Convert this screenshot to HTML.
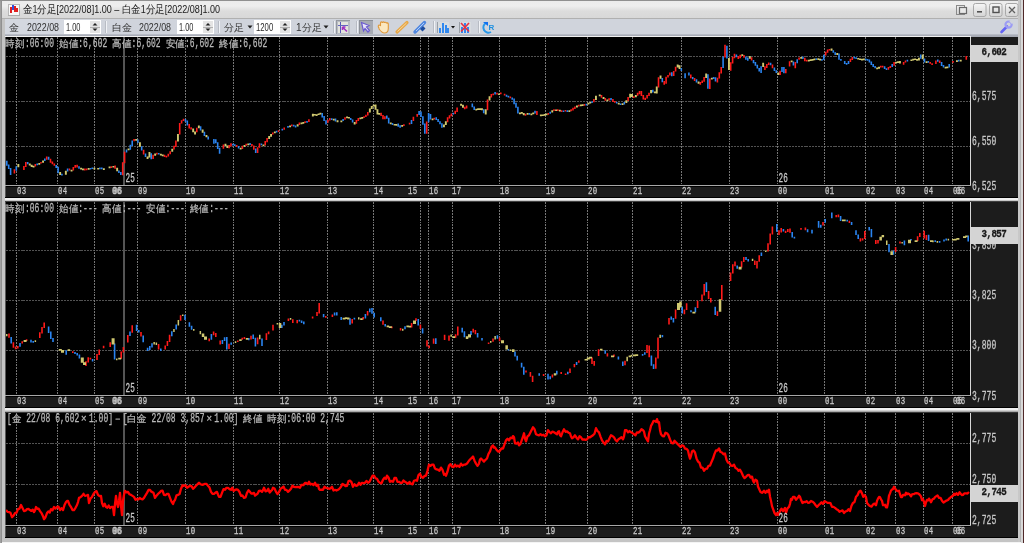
<!DOCTYPE html><html><head><meta charset="utf-8"><title>chart</title><style>html,body{margin:0;padding:0;width:1024px;height:543px;overflow:hidden;background:#c8c8c8}svg{display:block;will-change:transform}</style></head><body><svg width="1024" height="543" viewBox="0 0 1024 543"><defs>
<linearGradient id="tb" x1="0" y1="0" x2="0" y2="1"><stop offset="0" stop-color="#ececec"/><stop offset="0.3" stop-color="#eeeeee"/><stop offset="0.6" stop-color="#dcdcdc"/><stop offset="1" stop-color="#d8d8d8"/></linearGradient>
<linearGradient id="btn" x1="0" y1="0" x2="0" y2="1"><stop offset="0" stop-color="#f6f6f6"/><stop offset="1" stop-color="#d4d4d4"/></linearGradient>
<clipPath id="c1"><rect x="6" y="37" width="964" height="148"/></clipPath>
<clipPath id="c2"><rect x="6" y="202" width="964" height="193"/></clipPath>
<clipPath id="c3"><rect x="6" y="413" width="964" height="112"/></clipPath>
</defs><g shape-rendering="crispEdges"><rect x="0" y="0" width="1024" height="543" fill="#c4c4c4"/><rect x="0" y="0" width="1" height="543" fill="#a0a0a0"/><rect x="1" y="0" width="1" height="543" fill="#909090"/><rect x="0" y="0" width="1024" height="1" fill="#909090"/><rect x="2" y="1" width="1016" height="17" fill="url(#tb)"/><rect x="2" y="18" width="1016" height="1" fill="#b0b0b0"/><rect x="5" y="19" width="1013" height="15" fill="#d0d4dc"/><rect x="5" y="34" width="1013" height="1" fill="#b8bcc6"/><rect x="5" y="35" width="1013" height="2" fill="#a8acb6"/><rect x="5" y="36" width="966" height="1" fill="#f0f0f0"/><rect x="5" y="37" width="966" height="1" fill="#6a6a6a"/><rect x="1018" y="0" width="2" height="543" fill="#c8c8c8"/><rect x="1020" y="0" width="1" height="543" fill="#b4b4b4"/><rect x="1021" y="0" width="2" height="543" fill="#d8d8d8"/><rect x="1023" y="0" width="1" height="543" fill="#502828"/><rect x="2" y="538" width="1016" height="4" fill="#c4c4c4"/><rect x="2" y="542" width="1019" height="1" fill="#f4f4f4"/></g><g shape-rendering="crispEdges"><rect x="8" y="4" width="11" height="11" fill="#f8f8f8" stroke="#909090" stroke-width="0.6"/><rect x="10" y="7" width="2" height="6" fill="#e02020"/><rect x="12" y="5" width="2" height="5" fill="#3050e0"/><rect x="14" y="6" width="2" height="6" fill="#e02020"/><rect x="16" y="8" width="2" height="4" fill="#e02020"/></g><text x="23" y="12.8" font-family="'Liberation Sans',sans-serif" font-size="10.5" fill="#202020" textLength="197" lengthAdjust="spacingAndGlyphs">金1分足[2022/08]1.00 – 白金1分足[2022/08]1.00</text><rect x="956.5" y="5.5" width="8" height="9" fill="none" stroke="#8a8a8a" stroke-width="1"/><rect x="959.5" y="7.5" width="7" height="6" fill="#e8e8e8" stroke="#6a6a6a" stroke-width="1.2"/><rect x="973.5" y="3.5" width="12.5" height="13" rx="2" fill="url(#btn)" stroke="#a8a8a8" stroke-width="1"/><rect x="989.5" y="3.5" width="12.5" height="13" rx="2" fill="url(#btn)" stroke="#a8a8a8" stroke-width="1"/><rect x="1005.5" y="3.5" width="12.5" height="13" rx="2" fill="url(#btn)" stroke="#a8a8a8" stroke-width="1"/><rect x="977" y="11" width="5" height="1.6" fill="#505050"/><rect x="993" y="7" width="6" height="5.5" fill="none" stroke="#505050" stroke-width="1.4"/><path d="M1009 7 L1015 13 M1015 7 L1009 13" stroke="#606060" stroke-width="1.3"/><rect x="5" y="19" width="59" height="15" fill="#d4d8e0"/><text x="9" y="31" font-family="'Liberation Sans',sans-serif" font-size="10" fill="#303030">金</text><text x="27" y="31" font-family="'Liberation Sans',sans-serif" font-size="10.5" fill="#303030" textLength="32" lengthAdjust="spacingAndGlyphs">2022/08</text><g shape-rendering="crispEdges"><rect x="64" y="20" width="37" height="14" fill="#ffffff"/><rect x="90" y="21" width="10" height="12" fill="#e4e4e4"/><rect x="90" y="27" width="10" height="1" fill="#b0b0b0"/></g><path d="M92.5 25.5 l2.5 -2.5 l2.5 2.5 z M92.5 28.5 l2.5 2.5 l2.5 -2.5 z" fill="#202020"/><text x="66" y="30.5" font-family="'Liberation Sans',sans-serif" font-size="11" fill="#282828" textLength="14.4" lengthAdjust="spacingAndGlyphs">1.00</text><rect x="105" y="21" width="1" height="12" fill="#b8bcc4"/><rect x="106" y="21" width="1" height="12" fill="#f0f2f6"/><text x="112" y="31" font-family="'Liberation Sans',sans-serif" font-size="10" fill="#303030">白金</text><text x="139" y="31" font-family="'Liberation Sans',sans-serif" font-size="10.5" fill="#303030" textLength="32" lengthAdjust="spacingAndGlyphs">2022/08</text><g shape-rendering="crispEdges"><rect x="177" y="20" width="37" height="14" fill="#ffffff"/><rect x="203" y="21" width="10" height="12" fill="#e4e4e4"/><rect x="203" y="27" width="10" height="1" fill="#b0b0b0"/></g><path d="M205.5 25.5 l2.5 -2.5 l2.5 2.5 z M205.5 28.5 l2.5 2.5 l2.5 -2.5 z" fill="#202020"/><text x="179" y="30.5" font-family="'Liberation Sans',sans-serif" font-size="11" fill="#282828" textLength="14.4" lengthAdjust="spacingAndGlyphs">1.00</text><rect x="218" y="21" width="1" height="12" fill="#b8bcc4"/><rect x="219" y="21" width="1" height="12" fill="#f0f2f6"/><text x="224" y="31" font-family="'Liberation Sans',sans-serif" font-size="10" fill="#303030">分足</text><path d="M247.5 25.5 h5 l-2.5 3 z" fill="#202020"/><g shape-rendering="crispEdges"><rect x="254" y="20" width="37" height="14" fill="#ffffff"/><rect x="280" y="21" width="10" height="12" fill="#e4e4e4"/><rect x="280" y="27" width="10" height="1" fill="#b0b0b0"/></g><path d="M282.5 25.5 l2.5 -2.5 l2.5 2.5 z M282.5 28.5 l2.5 2.5 l2.5 -2.5 z" fill="#202020"/><text x="256" y="30.5" font-family="'Liberation Sans',sans-serif" font-size="11" fill="#282828" textLength="17.2" lengthAdjust="spacingAndGlyphs">1200</text><text x="296" y="31" font-family="'Liberation Sans',sans-serif" font-size="10" fill="#303030">1分足</text><path d="M323.5 25.5 h5 l-2.5 3 z" fill="#202020"/><rect x="333" y="21" width="1" height="12" fill="#b8bcc4"/><rect x="334" y="21" width="1" height="12" fill="#f0f2f6"/><g shape-rendering="crispEdges"><rect x="336" y="20" width="14" height="14" fill="#b8bcc4"/><rect x="336" y="20" width="14" height="1" fill="#9498a0"/><rect x="336" y="20" width="1" height="14" fill="#9498a0"/><rect x="338" y="22" width="10" height="11" fill="#e4e4dc"/><rect x="340" y="22" width="1" height="11" fill="#5858b8"/><rect x="338" y="25" width="10" height="1" fill="#6464c0"/></g><path d="M342.5 27 l4.5 4.5 M342.5 27 h3 M342.5 27 v3" stroke="#a030c0" stroke-width="1.6" fill="none"/><rect x="356" y="21" width="1" height="12" fill="#b8bcc4"/><rect x="357" y="21" width="1" height="12" fill="#f0f2f6"/><g shape-rendering="crispEdges"><rect x="359" y="20" width="14" height="14" fill="#a8acb4"/><rect x="359" y="20" width="14" height="1" fill="#8c9098"/><rect x="359" y="20" width="1" height="14" fill="#8c9098"/></g><path d="M361.5 22.5 l7.5 3 l-2.5 1.5 l3 3.5 l-1.5 1.5 l-3 -3.5 l-1.5 2.5 z" fill="#e8e4f8" stroke="#6a5ad0" stroke-width="1.2"/><path d="M379 28 c-1 -1 -1 -3 0 -3 c1 0 1.5 1 1.5 1 v-3 c0 -1.5 2 -1.5 2 0 c0 -1.5 2 -1.5 2 0 c0 -1 2 -1 2 0.5 c0 -1 1.8 -0.8 1.8 0.5 v4.5 c0 3 -2 4.5 -4 4.5 c-2 0 -3 -1 -5.3 -4 z" fill="#fbe8c0" stroke="#e09838" stroke-width="1.1"/><path d="M397 32 l10 -9.5" stroke="#e8a848" stroke-width="3.2" stroke-linecap="round"/><path d="M397.5 31.5 l9 -8.5" stroke="#f8d8a0" stroke-width="1"/><path d="M415 32 l9.5 -9.5" stroke="#5088e0" stroke-width="3.4" stroke-linecap="round"/><path d="M416 31 l8 -8" stroke="#b0ccf8" stroke-width="1"/><path d="M420 29 l3 -3 l2.5 2.5 l-3 3 z" fill="#1e4ea0"/><rect x="433" y="21" width="1" height="12" fill="#b8bcc4"/><rect x="434" y="21" width="1" height="12" fill="#f0f2f6"/><g shape-rendering="crispEdges"><rect x="437" y="22" width="12" height="11" fill="#d8dce0"/><rect x="437" y="22" width="1" height="11" fill="#9aa0a8"/><rect x="439" y="28" width="2" height="5" fill="#3088f0"/><rect x="442" y="23" width="2" height="10" fill="#3088f0"/><rect x="445" y="25" width="2" height="8" fill="#3088f0"/><rect x="447" y="28" width="2" height="5" fill="#3088f0"/></g><path d="M451 26 h4 l-2 2.5 z" fill="#101010"/><g shape-rendering="crispEdges"><rect x="459" y="22" width="12" height="11" fill="#d8dce0"/><rect x="459" y="22" width="1" height="11" fill="#9aa0a8"/><rect x="461" y="27" width="2" height="6" fill="#3088f0"/><rect x="464" y="23" width="2" height="10" fill="#3088f0"/><rect x="467" y="27" width="2" height="6" fill="#3088f0"/></g><path d="M461 23 l8 8.5 M469 23 l-8 8.5" stroke="#e83040" stroke-width="1.6"/><rect x="478" y="21" width="1" height="12" fill="#b8bcc4"/><rect x="479" y="21" width="1" height="12" fill="#f0f2f6"/><path d="M486 23 a4.6 4.6 0 1 0 5 9" fill="none" stroke="#2898e8" stroke-width="2"/><path d="M483 22 h5 v4 z" fill="#1070f0"/><text x="488.5" y="30" font-family="'Liberation Sans',sans-serif" font-size="8" font-weight="bold" fill="#2090e0">R</text><path d="M1001.5 32 l5.5 -5.5" stroke="#6464f4" stroke-width="2.6" stroke-linecap="round"/><circle cx="1008.6" cy="24.6" r="3.1" fill="none" stroke="#9c9cf4" stroke-width="2.2"/><path d="M1009.2 21.2 l3.2 -1.4 l1.2 1.2 l-1.4 3.2 z" fill="#d0d4dc"/><circle cx="1008.6" cy="24.6" r="1" fill="#d0d4dc"/><g shape-rendering="crispEdges"><rect x="5" y="37" width="1" height="160" fill="#585858"/><rect x="6" y="37" width="964" height="148" fill="#000"/><rect x="970" y="37" width="48" height="160" fill="#1c1c1c"/><rect x="970" y="37" width="1" height="149" fill="#d8d8d8"/><rect x="5" y="185" width="966" height="1" fill="#a8a8a8"/><rect x="6" y="186" width="964" height="1" fill="#000"/><rect x="6" y="187" width="964" height="10" fill="#1c1c1c"/><rect x="5" y="197" width="1013" height="1" fill="#000"/><line x1="6" y1="56.5" x2="970" y2="56.5" stroke="#525252" stroke-width="1" stroke-dasharray="2 0.9"/><line x1="6" y1="101.5" x2="970" y2="101.5" stroke="#525252" stroke-width="1" stroke-dasharray="2 0.9"/><line x1="6" y1="146.5" x2="970" y2="146.5" stroke="#525252" stroke-width="1" stroke-dasharray="2 0.9"/><line x1="16.5" y1="37" x2="16.5" y2="185" stroke="#767676" stroke-width="1" stroke-dasharray="1.8 1"/><line x1="57.5" y1="37" x2="57.5" y2="185" stroke="#767676" stroke-width="1" stroke-dasharray="1.8 1"/><line x1="94.5" y1="37" x2="94.5" y2="185" stroke="#767676" stroke-width="1" stroke-dasharray="1.8 1"/><rect x="123" y="37" width="2" height="148" fill="#555555"/><line x1="137.5" y1="37" x2="137.5" y2="185" stroke="#767676" stroke-width="1" stroke-dasharray="1.8 1"/><line x1="185.5" y1="37" x2="185.5" y2="185" stroke="#767676" stroke-width="1" stroke-dasharray="1.8 1"/><line x1="233.5" y1="37" x2="233.5" y2="185" stroke="#767676" stroke-width="1" stroke-dasharray="1.8 1"/><line x1="279.5" y1="37" x2="279.5" y2="185" stroke="#767676" stroke-width="1" stroke-dasharray="1.8 1"/><line x1="327.5" y1="37" x2="327.5" y2="185" stroke="#767676" stroke-width="1" stroke-dasharray="1.8 1"/><line x1="373.5" y1="37" x2="373.5" y2="185" stroke="#767676" stroke-width="1" stroke-dasharray="1.8 1"/><line x1="420.5" y1="37" x2="420.5" y2="185" stroke="#767676" stroke-width="1" stroke-dasharray="1.8 1"/><line x1="428.5" y1="37" x2="428.5" y2="185" stroke="#767676" stroke-width="1" stroke-dasharray="1.8 1"/><line x1="452.5" y1="37" x2="452.5" y2="185" stroke="#767676" stroke-width="1" stroke-dasharray="1.8 1"/><line x1="499.5" y1="37" x2="499.5" y2="185" stroke="#767676" stroke-width="1" stroke-dasharray="1.8 1"/><line x1="545.5" y1="37" x2="545.5" y2="185" stroke="#767676" stroke-width="1" stroke-dasharray="1.8 1"/><line x1="587.5" y1="37" x2="587.5" y2="185" stroke="#767676" stroke-width="1" stroke-dasharray="1.8 1"/><line x1="632.5" y1="37" x2="632.5" y2="185" stroke="#767676" stroke-width="1" stroke-dasharray="1.8 1"/><line x1="681.5" y1="37" x2="681.5" y2="185" stroke="#767676" stroke-width="1" stroke-dasharray="1.8 1"/><line x1="729.5" y1="37" x2="729.5" y2="185" stroke="#767676" stroke-width="1" stroke-dasharray="1.8 1"/><line x1="777.5" y1="37" x2="777.5" y2="185" stroke="#767676" stroke-width="1" stroke-dasharray="1.8 1"/><line x1="824.5" y1="37" x2="824.5" y2="185" stroke="#767676" stroke-width="1" stroke-dasharray="1.8 1"/><line x1="865.5" y1="37" x2="865.5" y2="185" stroke="#767676" stroke-width="1" stroke-dasharray="1.8 1"/><line x1="895.5" y1="37" x2="895.5" y2="185" stroke="#767676" stroke-width="1" stroke-dasharray="1.8 1"/><line x1="923.5" y1="37" x2="923.5" y2="185" stroke="#767676" stroke-width="1" stroke-dasharray="1.8 1"/><line x1="952.5" y1="37" x2="952.5" y2="185" stroke="#767676" stroke-width="1" stroke-dasharray="1.8 1"/></g><text transform="scale(0.64,1)" x="38.91 46.48 54.06 61.64 69.22 76.80 122.27 129.84 137.42 145.00 152.58 160.16 205.62 213.20 220.78 228.36 235.94 243.52 288.98 296.56 304.14 311.72 319.30 326.87 372.34 379.92 387.50 395.08 402.66 410.23" y="47" fill="#b8b8b8" stroke="#b8b8b8" stroke-width="0.3" font-family="'Liberation Mono',monospace" font-size="12.5" font-weight="normal">:06:00:6,602:6,602:6,602:6,602</text><text transform="scale(0.95,1)" x="5.79 16.00 61.95 72.16 118.11 128.32 174.26 184.47 230.42 240.63" y="47" fill="#b8b8b8" stroke="#b8b8b8" stroke-width="0.25" font-family="'Liberation Sans',sans-serif" font-size="10" font-weight="normal">時刻始値高値安値終値</text><path clip-path="url(#c1)" d="M13.6 169.3h1.6v4.3h-1.6zM23.1 166.0h1.6v4.0h-1.6zM25.0 162.0h1.6v4.9h-1.6zM34.5 164.1h1.6v2.5h-1.6zM40.2 161.9h1.6v1.7h-1.6zM45.9 156.4h1.6v3.3h-1.6zM49.7 158.7h1.6v4.0h-1.6zM51.6 161.5h1.6v2.8h-1.6zM53.5 163.5h1.6v2.2h-1.6zM68.7 168.6h1.6v2.0h-1.6zM72.5 167.0h1.6v3.6h-1.6zM74.4 165.0h1.6v2.8h-1.6zM76.3 164.8h1.6v2.7h-1.6zM83.9 168.6h1.6v1.9h-1.6zM85.8 168.5h1.6v1.7h-1.6zM110.5 166.2h1.6v1.7h-1.6zM114.3 165.6h1.6v3.1h-1.6zM121.9 162.2h1.6v13.0h-1.6zM123.8 151.8h1.6v11.5h-1.6zM133.3 139.0h1.6v2.3h-1.6zM142.8 149.7h1.6v4.7h-1.6zM152.3 154.8h1.6v4.3h-1.6zM156.1 152.8h1.6v1.7h-1.6zM163.7 154.8h1.6v2.3h-1.6zM165.6 155.8h1.6v1.7h-1.6zM167.5 153.7h1.6v2.9h-1.6zM169.4 151.3h1.6v2.9h-1.6zM173.2 145.8h1.6v3.6h-1.6zM175.1 140.6h1.6v6.3h-1.6zM178.9 123.0h1.6v11.6h-1.6zM180.8 120.2h1.6v3.3h-1.6zM182.7 118.7h1.6v2.4h-1.6zM188.4 124.0h1.6v4.4h-1.6zM190.3 127.2h1.6v2.3h-1.6zM196.0 127.7h1.6v4.6h-1.6zM222.6 144.6h1.6v4.2h-1.6zM228.3 145.0h1.6v3.2h-1.6zM230.2 143.3h1.6v3.2h-1.6zM235.9 145.1h1.6v2.0h-1.6zM241.6 145.8h1.6v3.2h-1.6zM245.4 143.7h1.6v2.1h-1.6zM251.1 144.0h1.6v2.3h-1.6zM253.0 145.4h1.6v4.4h-1.6zM256.8 147.2h1.6v5.8h-1.6zM258.7 143.2h1.6v4.6h-1.6zM264.4 141.1h1.6v4.4h-1.6zM266.3 138.0h1.6v4.3h-1.6zM272.0 132.6h1.6v2.0h-1.6zM277.7 130.2h1.6v1.7h-1.6zM283.4 127.4h1.6v2.4h-1.6zM291.0 124.5h1.6v1.8h-1.6zM298.6 122.6h1.6v2.3h-1.6zM304.3 121.3h1.6v1.8h-1.6zM308.1 119.3h1.6v2.7h-1.6zM327.1 119.8h1.6v3.0h-1.6zM329.0 118.0h1.6v2.5h-1.6zM344.2 117.3h1.6v2.4h-1.6zM355.6 120.1h1.6v3.7h-1.6zM357.5 118.0h1.6v3.1h-1.6zM363.2 116.3h1.6v1.7h-1.6zM365.1 114.7h1.6v2.2h-1.6zM367.0 111.9h1.6v3.5h-1.6zM380.3 112.7h1.6v3.2h-1.6zM382.2 114.9h1.6v4.4h-1.6zM384.1 116.3h1.6v3.0h-1.6zM403.1 124.3h1.6v1.7h-1.6zM408.8 122.8h1.6v1.7h-1.6zM412.6 116.8h1.6v4.2h-1.6zM416.4 113.9h1.6v2.8h-1.6zM425.9 121.6h1.6v12.1h-1.6zM433.5 117.8h1.6v1.7h-1.6zM446.8 117.2h1.6v5.0h-1.6zM448.7 115.3h1.6v3.1h-1.6zM450.6 113.5h1.6v2.7h-1.6zM454.4 110.7h1.6v3.2h-1.6zM456.3 107.6h1.6v4.4h-1.6zM463.9 106.7h1.6v2.6h-1.6zM465.8 105.5h1.6v3.0h-1.6zM486.7 99.5h1.6v10.7h-1.6zM490.5 94.1h1.6v3.3h-1.6zM492.4 93.5h1.6v1.7h-1.6zM496.2 92.7h1.6v1.7h-1.6zM500.0 92.6h1.6v1.7h-1.6zM503.8 93.8h1.6v1.7h-1.6zM509.5 96.6h1.6v1.7h-1.6zM524.7 113.8h1.6v1.9h-1.6zM536.1 110.9h1.6v4.1h-1.6zM547.5 113.1h1.6v1.7h-1.6zM553.2 109.2h1.6v1.7h-1.6zM557.0 109.2h1.6v1.7h-1.6zM560.8 110.3h1.6v1.8h-1.6zM564.6 109.9h1.6v1.7h-1.6zM570.3 109.2h1.6v2.0h-1.6zM572.2 107.8h1.6v2.6h-1.6zM574.1 106.6h1.6v2.4h-1.6zM577.9 104.7h1.6v1.7h-1.6zM583.6 104.0h1.6v1.7h-1.6zM593.1 98.9h1.6v3.4h-1.6zM600.7 95.0h1.6v2.8h-1.6zM604.5 98.0h1.6v2.8h-1.6zM608.3 98.2h1.6v2.4h-1.6zM612.1 99.1h1.6v2.9h-1.6zM614.0 101.1h1.6v1.7h-1.6zM627.3 97.1h1.6v3.8h-1.6zM633.0 96.3h1.6v1.8h-1.6zM636.8 92.8h1.6v3.0h-1.6zM638.7 91.1h1.6v3.1h-1.6zM640.6 90.9h1.6v5.1h-1.6zM642.5 95.0h1.6v4.4h-1.6zM644.4 97.7h1.6v2.3h-1.6zM646.3 95.1h1.6v3.5h-1.6zM648.2 92.8h1.6v3.2h-1.6zM657.7 77.2h1.6v10.3h-1.6zM663.4 81.0h1.6v3.7h-1.6zM665.3 76.7h1.6v7.0h-1.6zM667.2 74.9h1.6v2.7h-1.6zM669.1 72.4h1.6v3.2h-1.6zM672.9 70.9h1.6v5.2h-1.6zM674.8 66.8h1.6v4.7h-1.6zM690.0 74.6h1.6v3.6h-1.6zM693.8 78.1h1.6v2.8h-1.6zM699.5 82.0h1.6v2.8h-1.6zM701.4 80.5h1.6v2.6h-1.6zM703.3 77.0h1.6v4.7h-1.6zM709.0 78.6h1.6v10.4h-1.6zM716.6 77.7h1.6v4.8h-1.6zM718.5 72.3h1.6v6.3h-1.6zM720.4 67.0h1.6v6.5h-1.6zM724.2 44.7h1.6v12.8h-1.6zM729.9 62.2h1.6v8.6h-1.6zM731.8 57.0h1.6v6.4h-1.6zM733.7 53.8h1.6v4.5h-1.6zM737.5 56.0h1.6v3.0h-1.6zM739.4 54.7h1.6v3.6h-1.6zM743.2 55.0h1.6v2.8h-1.6zM750.8 57.2h1.6v3.4h-1.6zM764.1 66.2h1.6v3.9h-1.6zM766.0 63.9h1.6v4.2h-1.6zM767.9 62.6h1.6v2.5h-1.6zM771.7 64.6h1.6v3.7h-1.6zM779.3 70.7h1.6v4.4h-1.6zM785.0 69.1h1.6v4.1h-1.6zM788.8 61.3h1.6v5.1h-1.6zM794.5 62.0h1.6v6.2h-1.6zM798.3 57.4h1.6v2.4h-1.6zM804.0 57.7h1.6v3.5h-1.6zM805.9 59.8h1.6v1.7h-1.6zM824.9 51.8h1.6v3.6h-1.6zM826.8 49.4h1.6v3.3h-1.6zM828.7 48.9h1.6v1.7h-1.6zM849.6 58.8h1.6v3.1h-1.6zM851.5 56.9h1.6v3.2h-1.6zM880.0 65.8h1.6v1.8h-1.6zM881.9 65.7h1.6v1.7h-1.6zM887.6 67.1h1.6v2.7h-1.6zM889.5 66.0h1.6v1.9h-1.6zM893.3 61.9h1.6v3.8h-1.6zM902.8 61.9h1.6v2.9h-1.6zM904.7 60.4h1.6v2.1h-1.6zM929.4 62.0h1.6v1.8h-1.6zM931.3 63.2h1.6v1.8h-1.6zM935.1 60.6h1.6v3.4h-1.6zM938.9 60.4h1.6v2.7h-1.6zM952.2 60.9h1.6v1.9h-1.6zM965.5 56.1h1.6v3.7h-1.6z" fill="#ff1a1a"/><path clip-path="url(#c1)" d="M6.0 160.8h1.6v4.9h-1.6zM7.9 164.5h1.6v4.5h-1.6zM9.8 167.9h1.6v7.1h-1.6zM15.5 166.2h1.6v4.6h-1.6zM26.9 162.0h1.6v2.3h-1.6zM36.4 163.5h1.6v1.7h-1.6zM44.0 158.6h1.6v2.5h-1.6zM47.8 156.7h1.6v3.0h-1.6zM55.4 165.0h1.6v3.1h-1.6zM57.3 166.8h1.6v6.4h-1.6zM61.1 173.8h1.6v1.7h-1.6zM66.8 168.4h1.6v3.0h-1.6zM78.2 166.2h1.6v2.6h-1.6zM89.6 167.9h1.6v1.7h-1.6zM91.5 167.4h1.6v1.7h-1.6zM99.1 167.6h1.6v1.7h-1.6zM101.0 167.5h1.6v1.8h-1.6zM118.1 170.5h1.6v2.6h-1.6zM120.0 171.9h1.6v3.2h-1.6zM125.7 149.6h1.6v2.9h-1.6zM129.5 144.7h1.6v5.0h-1.6zM131.4 140.4h1.6v5.7h-1.6zM137.1 139.5h1.6v3.6h-1.6zM140.9 146.2h1.6v4.4h-1.6zM144.7 153.4h1.6v3.7h-1.6zM150.4 153.3h1.6v5.9h-1.6zM158.0 152.9h1.6v1.7h-1.6zM184.6 118.9h1.6v2.9h-1.6zM186.5 120.4h1.6v5.0h-1.6zM199.8 126.2h1.6v4.4h-1.6zM203.6 131.8h1.6v4.1h-1.6zM207.4 136.4h1.6v3.1h-1.6zM213.1 139.1h1.6v4.7h-1.6zM215.0 139.2h1.6v4.1h-1.6zM216.9 142.3h1.6v6.7h-1.6zM218.8 147.8h1.6v6.0h-1.6zM232.1 143.8h1.6v1.7h-1.6zM234.0 144.3h1.6v1.8h-1.6zM237.8 146.0h1.6v2.4h-1.6zM249.2 143.1h1.6v1.9h-1.6zM254.9 148.6h1.6v4.3h-1.6zM260.6 143.4h1.6v1.9h-1.6zM275.8 130.8h1.6v1.7h-1.6zM281.5 128.8h1.6v1.7h-1.6zM287.2 126.0h1.6v1.8h-1.6zM292.9 124.7h1.6v1.7h-1.6zM294.8 125.4h1.6v2.2h-1.6zM306.2 121.0h1.6v1.7h-1.6zM321.4 113.0h1.6v4.5h-1.6zM323.3 116.1h1.6v5.0h-1.6zM325.2 120.2h1.6v4.2h-1.6zM330.9 118.2h1.6v1.7h-1.6zM334.7 118.6h1.6v2.8h-1.6zM342.3 119.0h1.6v2.0h-1.6zM349.9 117.9h1.6v2.1h-1.6zM351.8 119.5h1.6v3.1h-1.6zM386.0 115.5h1.6v3.3h-1.6zM387.9 117.7h1.6v5.7h-1.6zM391.7 123.0h1.6v1.9h-1.6zM397.4 123.6h1.6v3.1h-1.6zM399.3 125.3h1.6v2.5h-1.6zM410.7 119.9h1.6v4.0h-1.6zM418.3 110.9h1.6v4.0h-1.6zM420.2 111.5h1.6v5.5h-1.6zM422.1 116.2h1.6v8.5h-1.6zM424.0 123.5h1.6v10.3h-1.6zM427.8 113.0h1.6v9.2h-1.6zM429.7 114.1h1.6v5.3h-1.6zM435.4 117.2h1.6v2.7h-1.6zM437.3 118.9h1.6v3.0h-1.6zM439.2 121.2h1.6v3.1h-1.6zM441.1 123.3h1.6v4.4h-1.6zM452.5 112.7h1.6v1.9h-1.6zM471.5 103.6h1.6v3.7h-1.6zM473.4 106.4h1.6v3.6h-1.6zM482.9 109.2h1.6v4.0h-1.6zM494.3 92.1h1.6v2.5h-1.6zM505.7 94.7h1.6v2.0h-1.6zM507.6 95.8h1.6v1.7h-1.6zM511.4 97.4h1.6v2.4h-1.6zM513.3 98.5h1.6v5.8h-1.6zM515.2 102.8h1.6v5.0h-1.6zM517.1 106.8h1.6v6.7h-1.6zM528.5 113.0h1.6v1.7h-1.6zM534.2 110.8h1.6v2.6h-1.6zM549.4 111.8h1.6v1.9h-1.6zM562.7 110.4h1.6v1.7h-1.6zM566.5 110.2h1.6v1.7h-1.6zM585.5 103.7h1.6v1.7h-1.6zM591.2 101.2h1.6v1.7h-1.6zM610.2 97.9h1.6v2.4h-1.6zM615.9 101.9h1.6v1.7h-1.6zM619.7 103.4h1.6v1.7h-1.6zM623.5 102.1h1.6v2.3h-1.6zM652.0 89.8h1.6v2.6h-1.6zM661.5 78.1h1.6v4.1h-1.6zM671.0 72.3h1.6v3.9h-1.6zM680.5 68.0h1.6v3.1h-1.6zM684.3 73.2h1.6v5.0h-1.6zM688.1 72.6h1.6v3.0h-1.6zM691.9 76.9h1.6v2.4h-1.6zM695.7 79.3h1.6v3.2h-1.6zM707.1 74.3h1.6v14.5h-1.6zM712.8 76.9h1.6v2.0h-1.6zM714.7 77.3h1.6v4.3h-1.6zM722.3 56.6h1.6v11.4h-1.6zM726.1 45.7h1.6v12.8h-1.6zM735.6 54.5h1.6v2.8h-1.6zM745.1 56.5h1.6v3.2h-1.6zM747.0 57.6h1.6v3.1h-1.6zM752.7 59.9h1.6v3.3h-1.6zM754.6 62.0h1.6v3.8h-1.6zM756.5 64.8h1.6v3.6h-1.6zM758.4 67.9h1.6v3.7h-1.6zM760.3 66.3h1.6v6.8h-1.6zM769.8 62.7h1.6v2.6h-1.6zM773.6 67.6h1.6v3.4h-1.6zM775.5 70.3h1.6v2.8h-1.6zM781.2 67.0h1.6v4.9h-1.6zM783.1 66.9h1.6v6.4h-1.6zM792.6 61.5h1.6v4.1h-1.6zM796.4 59.2h1.6v4.0h-1.6zM802.1 56.5h1.6v2.4h-1.6zM815.4 58.2h1.6v1.7h-1.6zM821.1 59.1h1.6v1.7h-1.6zM823.0 54.7h1.6v5.0h-1.6zM832.5 50.2h1.6v2.5h-1.6zM834.4 52.2h1.6v2.8h-1.6zM838.2 53.6h1.6v6.2h-1.6zM840.1 59.1h1.6v1.7h-1.6zM843.9 61.1h1.6v2.8h-1.6zM845.8 63.0h1.6v1.8h-1.6zM847.7 61.0h1.6v2.9h-1.6zM853.4 56.7h1.6v1.7h-1.6zM855.3 57.3h1.6v1.7h-1.6zM864.8 58.5h1.6v1.7h-1.6zM866.7 59.1h1.6v1.7h-1.6zM868.6 59.5h1.6v3.1h-1.6zM870.5 61.6h1.6v3.4h-1.6zM872.4 63.9h1.6v3.1h-1.6zM874.3 66.0h1.6v2.3h-1.6zM883.8 66.2h1.6v2.8h-1.6zM885.7 68.3h1.6v1.7h-1.6zM891.4 64.1h1.6v2.9h-1.6zM906.6 59.8h1.6v1.7h-1.6zM919.9 54.5h1.6v4.3h-1.6zM923.7 58.5h1.6v3.9h-1.6zM927.5 61.0h1.6v1.7h-1.6zM937.0 59.4h1.6v2.4h-1.6zM940.8 61.9h1.6v4.0h-1.6zM942.7 64.9h1.6v2.7h-1.6zM948.4 64.0h1.6v3.4h-1.6zM957.9 59.7h1.6v1.7h-1.6z" fill="#2a84f0"/><path clip-path="url(#c1)" d="M17.4 164.1h1.9v3.2h-1.9zM28.8 163.5h1.9v1.9h-1.9zM30.7 164.8h1.9v2.1h-1.9zM32.6 165.7h1.9v1.7h-1.9zM38.3 163.0h1.9v1.7h-1.9zM42.1 160.5h1.9v2.2h-1.9zM59.2 172.1h1.9v2.8h-1.9zM64.9 170.8h1.9v3.9h-1.9zM70.6 169.8h1.9v1.7h-1.9zM80.1 167.7h1.9v1.7h-1.9zM82.0 168.5h1.9v1.7h-1.9zM87.7 168.0h1.9v1.7h-1.9zM93.4 167.7h1.9v1.7h-1.9zM97.2 167.9h1.9v1.7h-1.9zM102.9 168.3h1.9v1.7h-1.9zM108.6 166.6h1.9v1.7h-1.9zM112.4 165.9h1.9v1.7h-1.9zM116.2 167.7h1.9v3.5h-1.9zM127.6 148.6h1.9v1.7h-1.9zM135.2 139.0h1.9v1.7h-1.9zM139.0 142.3h1.9v4.4h-1.9zM146.6 156.4h1.9v2.7h-1.9zM148.5 152.0h1.9v5.6h-1.9zM154.2 153.5h1.9v2.3h-1.9zM159.9 153.8h1.9v1.7h-1.9zM161.8 154.5h1.9v1.7h-1.9zM171.3 148.7h1.9v3.0h-1.9zM177.0 134.1h1.9v7.4h-1.9zM192.2 128.6h1.9v3.6h-1.9zM194.1 131.5h1.9v2.9h-1.9zM197.9 125.4h1.9v2.9h-1.9zM201.7 129.5h1.9v3.3h-1.9zM205.5 134.9h1.9v2.4h-1.9zM224.5 143.8h1.9v2.3h-1.9zM226.4 145.6h1.9v2.5h-1.9zM239.7 147.7h1.9v1.7h-1.9zM243.5 144.9h1.9v2.1h-1.9zM247.3 143.5h1.9v1.7h-1.9zM262.5 144.6h1.9v1.7h-1.9zM268.2 136.1h1.9v2.8h-1.9zM270.1 134.0h1.9v2.7h-1.9zM273.9 131.4h1.9v1.8h-1.9zM289.1 125.5h1.9v1.7h-1.9zM296.7 124.3h1.9v2.2h-1.9zM300.5 122.5h1.9v1.7h-1.9zM302.4 122.1h1.9v1.7h-1.9zM311.9 113.7h1.9v2.7h-1.9zM313.8 113.9h1.9v1.7h-1.9zM315.7 114.2h1.9v1.7h-1.9zM317.6 113.4h1.9v1.7h-1.9zM319.5 112.7h1.9v1.7h-1.9zM332.8 118.8h1.9v1.7h-1.9zM336.6 120.3h1.9v2.0h-1.9zM340.4 120.5h1.9v1.7h-1.9zM346.1 116.5h1.9v1.7h-1.9zM348.0 116.9h1.9v1.7h-1.9zM353.7 122.0h1.9v2.4h-1.9zM359.4 117.6h1.9v1.7h-1.9zM361.3 117.0h1.9v1.7h-1.9zM368.9 108.6h1.9v3.9h-1.9zM370.8 106.0h1.9v3.1h-1.9zM372.7 104.7h1.9v1.7h-1.9zM374.6 104.5h1.9v5.3h-1.9zM376.5 109.2h1.9v5.2h-1.9zM378.4 113.1h1.9v1.7h-1.9zM389.8 122.5h1.9v1.7h-1.9zM393.6 123.9h1.9v1.7h-1.9zM395.5 124.0h1.9v1.7h-1.9zM401.2 125.0h1.9v1.7h-1.9zM431.6 118.6h1.9v1.7h-1.9zM443.0 124.4h1.9v2.9h-1.9zM444.9 121.2h1.9v3.7h-1.9zM460.1 103.7h1.9v2.0h-1.9zM462.0 104.8h1.9v2.9h-1.9zM475.3 108.7h1.9v1.7h-1.9zM477.2 108.3h1.9v1.7h-1.9zM479.1 108.3h1.9v1.7h-1.9zM481.0 108.2h1.9v2.0h-1.9zM484.8 109.2h1.9v5.3h-1.9zM488.6 96.3h1.9v4.1h-1.9zM498.1 93.4h1.9v1.7h-1.9zM519.0 112.5h1.9v1.7h-1.9zM520.9 112.1h1.9v1.7h-1.9zM522.8 112.9h1.9v2.3h-1.9zM526.6 113.0h1.9v1.7h-1.9zM530.4 113.6h1.9v1.7h-1.9zM532.3 112.5h1.9v1.8h-1.9zM539.9 114.5h1.9v1.7h-1.9zM541.8 114.4h1.9v1.7h-1.9zM543.7 114.1h1.9v1.7h-1.9zM545.6 113.5h1.9v1.7h-1.9zM551.3 110.2h1.9v2.2h-1.9zM555.1 109.4h1.9v1.7h-1.9zM558.9 109.8h1.9v1.7h-1.9zM568.4 110.3h1.9v1.7h-1.9zM576.0 105.4h1.9v2.1h-1.9zM579.8 104.6h1.9v1.7h-1.9zM581.7 104.3h1.9v1.7h-1.9zM587.4 102.8h1.9v1.7h-1.9zM589.3 101.9h1.9v1.7h-1.9zM595.0 95.7h1.9v4.2h-1.9zM598.8 94.6h1.9v1.7h-1.9zM602.6 97.0h1.9v2.0h-1.9zM606.4 99.5h1.9v1.7h-1.9zM617.8 102.8h1.9v1.7h-1.9zM621.6 103.3h1.9v1.7h-1.9zM625.4 100.2h1.9v2.9h-1.9zM629.2 93.8h1.9v4.0h-1.9zM631.1 93.9h1.9v3.0h-1.9zM634.9 94.9h1.9v2.4h-1.9zM650.1 90.1h1.9v3.2h-1.9zM653.9 91.4h1.9v1.9h-1.9zM655.8 86.5h1.9v7.0h-1.9zM659.6 75.4h1.9v3.4h-1.9zM676.7 64.4h1.9v3.0h-1.9zM678.6 65.3h1.9v3.6h-1.9zM697.6 81.5h1.9v2.2h-1.9zM705.2 73.5h1.9v4.6h-1.9zM710.9 77.8h1.9v1.7h-1.9zM728.0 57.9h1.9v12.0h-1.9zM741.3 54.2h1.9v1.7h-1.9zM748.9 55.9h1.9v2.8h-1.9zM762.2 62.8h1.9v4.3h-1.9zM777.4 72.6h1.9v2.5h-1.9zM790.7 60.6h1.9v1.7h-1.9zM800.2 57.0h1.9v1.7h-1.9zM807.8 59.7h1.9v1.7h-1.9zM809.7 59.3h1.9v1.7h-1.9zM811.6 59.0h1.9v1.7h-1.9zM813.5 58.5h1.9v1.7h-1.9zM817.3 58.3h1.9v1.7h-1.9zM819.2 58.7h1.9v1.7h-1.9zM830.6 48.6h1.9v2.2h-1.9zM836.3 53.0h1.9v1.9h-1.9zM857.2 57.9h1.9v1.7h-1.9zM859.1 58.4h1.9v1.7h-1.9zM861.0 58.8h1.9v1.7h-1.9zM862.9 58.5h1.9v1.7h-1.9zM876.2 67.6h1.9v1.7h-1.9zM878.1 66.8h1.9v1.9h-1.9zM895.2 61.7h1.9v1.7h-1.9zM897.1 61.3h1.9v1.7h-1.9zM899.0 61.1h1.9v2.3h-1.9zM910.4 59.4h1.9v1.7h-1.9zM912.3 58.8h1.9v1.7h-1.9zM914.2 58.4h1.9v1.7h-1.9zM916.1 59.0h1.9v1.7h-1.9zM918.0 57.7h1.9v2.7h-1.9zM921.8 54.6h1.9v4.7h-1.9zM925.6 61.2h1.9v1.7h-1.9zM944.6 66.8h1.9v1.7h-1.9zM946.5 66.5h1.9v1.7h-1.9zM956.0 60.2h1.9v1.7h-1.9zM959.8 59.7h1.9v1.7h-1.9z" fill="#d0c870"/><text transform="scale(0.64,1)" x="196.09 203.67" y="182" fill="#c8c8c8" stroke="#c8c8c8" stroke-width="0.3" font-family="'Liberation Mono',monospace" font-size="12" font-weight="normal">25</text><text transform="scale(0.64,1)" x="1216.41 1223.98" y="182" fill="#c8c8c8" stroke="#c8c8c8" stroke-width="0.3" font-family="'Liberation Mono',monospace" font-size="12" font-weight="normal">26</text><text transform="scale(0.64,1)" x="26.56 34.14" y="194" fill="#c8c8c8" stroke="#c8c8c8" stroke-width="0.3" font-family="'Liberation Mono',monospace" font-size="11.5" font-weight="normal">03</text><text transform="scale(0.64,1)" x="90.62 98.20" y="194" fill="#c8c8c8" stroke="#c8c8c8" stroke-width="0.3" font-family="'Liberation Mono',monospace" font-size="11.5" font-weight="normal">04</text><text transform="scale(0.64,1)" x="148.44 156.02" y="194" fill="#c8c8c8" stroke="#c8c8c8" stroke-width="0.3" font-family="'Liberation Mono',monospace" font-size="11.5" font-weight="normal">05</text><text transform="scale(0.64,1)" x="175.00 182.58" y="194" fill="#c8c8c8" stroke="#c8c8c8" stroke-width="0.3" font-family="'Liberation Mono',monospace" font-size="11.5" font-weight="normal">06</text><text transform="scale(0.64,1)" x="176.56 184.14" y="194" fill="#c8c8c8" stroke="#c8c8c8" stroke-width="0.3" font-family="'Liberation Mono',monospace" font-size="11.5" font-weight="normal">06</text><text transform="scale(0.64,1)" x="215.62 223.20" y="194" fill="#c8c8c8" stroke="#c8c8c8" stroke-width="0.3" font-family="'Liberation Mono',monospace" font-size="11.5" font-weight="normal">09</text><text transform="scale(0.64,1)" x="290.62 298.20" y="194" fill="#c8c8c8" stroke="#c8c8c8" stroke-width="0.3" font-family="'Liberation Mono',monospace" font-size="11.5" font-weight="normal">10</text><text transform="scale(0.64,1)" x="365.62 373.20" y="194" fill="#c8c8c8" stroke="#c8c8c8" stroke-width="0.3" font-family="'Liberation Mono',monospace" font-size="11.5" font-weight="normal">11</text><text transform="scale(0.64,1)" x="437.50 445.08" y="194" fill="#c8c8c8" stroke="#c8c8c8" stroke-width="0.3" font-family="'Liberation Mono',monospace" font-size="11.5" font-weight="normal">12</text><text transform="scale(0.64,1)" x="512.50 520.08" y="194" fill="#c8c8c8" stroke="#c8c8c8" stroke-width="0.3" font-family="'Liberation Mono',monospace" font-size="11.5" font-weight="normal">13</text><text transform="scale(0.64,1)" x="584.38 591.95" y="194" fill="#c8c8c8" stroke="#c8c8c8" stroke-width="0.3" font-family="'Liberation Mono',monospace" font-size="11.5" font-weight="normal">14</text><text transform="scale(0.64,1)" x="637.50 645.08" y="194" fill="#c8c8c8" stroke="#c8c8c8" stroke-width="0.3" font-family="'Liberation Mono',monospace" font-size="11.5" font-weight="normal">15</text><text transform="scale(0.64,1)" x="670.31 677.89" y="194" fill="#c8c8c8" stroke="#c8c8c8" stroke-width="0.3" font-family="'Liberation Mono',monospace" font-size="11.5" font-weight="normal">16</text><text transform="scale(0.64,1)" x="706.25 713.83" y="194" fill="#c8c8c8" stroke="#c8c8c8" stroke-width="0.3" font-family="'Liberation Mono',monospace" font-size="11.5" font-weight="normal">17</text><text transform="scale(0.64,1)" x="781.25 788.83" y="194" fill="#c8c8c8" stroke="#c8c8c8" stroke-width="0.3" font-family="'Liberation Mono',monospace" font-size="11.5" font-weight="normal">18</text><text transform="scale(0.64,1)" x="853.12 860.70" y="194" fill="#c8c8c8" stroke="#c8c8c8" stroke-width="0.3" font-family="'Liberation Mono',monospace" font-size="11.5" font-weight="normal">19</text><text transform="scale(0.64,1)" x="918.75 926.33" y="194" fill="#c8c8c8" stroke="#c8c8c8" stroke-width="0.3" font-family="'Liberation Mono',monospace" font-size="11.5" font-weight="normal">20</text><text transform="scale(0.64,1)" x="989.06 996.64" y="194" fill="#c8c8c8" stroke="#c8c8c8" stroke-width="0.3" font-family="'Liberation Mono',monospace" font-size="11.5" font-weight="normal">21</text><text transform="scale(0.64,1)" x="1065.62 1073.20" y="194" fill="#c8c8c8" stroke="#c8c8c8" stroke-width="0.3" font-family="'Liberation Mono',monospace" font-size="11.5" font-weight="normal">22</text><text transform="scale(0.64,1)" x="1140.62 1148.20" y="194" fill="#c8c8c8" stroke="#c8c8c8" stroke-width="0.3" font-family="'Liberation Mono',monospace" font-size="11.5" font-weight="normal">23</text><text transform="scale(0.64,1)" x="1215.62 1223.20" y="194" fill="#c8c8c8" stroke="#c8c8c8" stroke-width="0.3" font-family="'Liberation Mono',monospace" font-size="11.5" font-weight="normal">00</text><text transform="scale(0.64,1)" x="1289.06 1296.64" y="194" fill="#c8c8c8" stroke="#c8c8c8" stroke-width="0.3" font-family="'Liberation Mono',monospace" font-size="11.5" font-weight="normal">01</text><text transform="scale(0.64,1)" x="1353.12 1360.70" y="194" fill="#c8c8c8" stroke="#c8c8c8" stroke-width="0.3" font-family="'Liberation Mono',monospace" font-size="11.5" font-weight="normal">02</text><text transform="scale(0.64,1)" x="1400.00 1407.58" y="194" fill="#c8c8c8" stroke="#c8c8c8" stroke-width="0.3" font-family="'Liberation Mono',monospace" font-size="11.5" font-weight="normal">03</text><text transform="scale(0.64,1)" x="1443.75 1451.33" y="194" fill="#c8c8c8" stroke="#c8c8c8" stroke-width="0.3" font-family="'Liberation Mono',monospace" font-size="11.5" font-weight="normal">04</text><text transform="scale(0.64,1)" x="1489.06 1496.64" y="194" fill="#c8c8c8" stroke="#c8c8c8" stroke-width="0.3" font-family="'Liberation Mono',monospace" font-size="11.5" font-weight="normal">05</text><text transform="scale(0.64,1)" x="1493.75 1501.33" y="194" fill="#c8c8c8" stroke="#c8c8c8" stroke-width="0.3" font-family="'Liberation Mono',monospace" font-size="11.5" font-weight="normal">06</text><text transform="scale(0.64,1)" x="1518.75 1526.33 1533.91 1541.48 1549.06" y="55.5" fill="#c8c8c8" stroke="#c8c8c8" stroke-width="0.3" font-family="'Liberation Mono',monospace" font-size="12.5" font-weight="normal">6,600</text><text transform="scale(0.64,1)" x="1518.75 1526.33 1533.91 1541.48 1549.06" y="100.0" fill="#c8c8c8" stroke="#c8c8c8" stroke-width="0.3" font-family="'Liberation Mono',monospace" font-size="12.5" font-weight="normal">6,575</text><text transform="scale(0.64,1)" x="1518.75 1526.33 1533.91 1541.48 1549.06" y="145.2" fill="#c8c8c8" stroke="#c8c8c8" stroke-width="0.3" font-family="'Liberation Mono',monospace" font-size="12.5" font-weight="normal">6,550</text><text transform="scale(0.64,1)" x="1518.75 1526.33 1533.91 1541.48 1549.06" y="189.9" fill="#c8c8c8" stroke="#c8c8c8" stroke-width="0.3" font-family="'Liberation Mono',monospace" font-size="12.5" font-weight="normal">6,525</text><rect x="971" y="45" width="47" height="17" fill="#d4d4d4" shape-rendering="crispEdges"/><g stroke="#181818" stroke-width="0.35"><text transform="scale(0.8,1)" x="1226.88 1233.06 1239.25 1245.44 1251.63" y="55.1" fill="#181818" stroke="#181818" stroke-width="0.3" font-family="'Liberation Mono',monospace" font-size="11.5" font-weight="bold">6,602</text></g><g shape-rendering="crispEdges"><rect x="5" y="202" width="1" height="205" fill="#585858"/><rect x="6" y="202" width="964" height="193" fill="#000"/><rect x="970" y="202" width="48" height="205" fill="#1c1c1c"/><rect x="970" y="202" width="1" height="194" fill="#d8d8d8"/><rect x="5" y="395" width="966" height="1" fill="#a8a8a8"/><rect x="6" y="396" width="964" height="1" fill="#000"/><rect x="6" y="397" width="964" height="10" fill="#1c1c1c"/><rect x="5" y="407" width="1013" height="1" fill="#000"/><line x1="6" y1="250.5" x2="970" y2="250.5" stroke="#525252" stroke-width="1" stroke-dasharray="2 0.9"/><line x1="6" y1="300.5" x2="970" y2="300.5" stroke="#525252" stroke-width="1" stroke-dasharray="2 0.9"/><line x1="6" y1="350.5" x2="970" y2="350.5" stroke="#525252" stroke-width="1" stroke-dasharray="2 0.9"/><line x1="16.5" y1="202" x2="16.5" y2="395" stroke="#767676" stroke-width="1" stroke-dasharray="1.8 1"/><line x1="57.5" y1="202" x2="57.5" y2="395" stroke="#767676" stroke-width="1" stroke-dasharray="1.8 1"/><line x1="94.5" y1="202" x2="94.5" y2="395" stroke="#767676" stroke-width="1" stroke-dasharray="1.8 1"/><rect x="123" y="202" width="2" height="193" fill="#555555"/><line x1="137.5" y1="202" x2="137.5" y2="395" stroke="#767676" stroke-width="1" stroke-dasharray="1.8 1"/><line x1="185.5" y1="202" x2="185.5" y2="395" stroke="#767676" stroke-width="1" stroke-dasharray="1.8 1"/><line x1="233.5" y1="202" x2="233.5" y2="395" stroke="#767676" stroke-width="1" stroke-dasharray="1.8 1"/><line x1="279.5" y1="202" x2="279.5" y2="395" stroke="#767676" stroke-width="1" stroke-dasharray="1.8 1"/><line x1="327.5" y1="202" x2="327.5" y2="395" stroke="#767676" stroke-width="1" stroke-dasharray="1.8 1"/><line x1="373.5" y1="202" x2="373.5" y2="395" stroke="#767676" stroke-width="1" stroke-dasharray="1.8 1"/><line x1="420.5" y1="202" x2="420.5" y2="395" stroke="#767676" stroke-width="1" stroke-dasharray="1.8 1"/><line x1="428.5" y1="202" x2="428.5" y2="395" stroke="#767676" stroke-width="1" stroke-dasharray="1.8 1"/><line x1="452.5" y1="202" x2="452.5" y2="395" stroke="#767676" stroke-width="1" stroke-dasharray="1.8 1"/><line x1="499.5" y1="202" x2="499.5" y2="395" stroke="#767676" stroke-width="1" stroke-dasharray="1.8 1"/><line x1="545.5" y1="202" x2="545.5" y2="395" stroke="#767676" stroke-width="1" stroke-dasharray="1.8 1"/><line x1="587.5" y1="202" x2="587.5" y2="395" stroke="#767676" stroke-width="1" stroke-dasharray="1.8 1"/><line x1="632.5" y1="202" x2="632.5" y2="395" stroke="#767676" stroke-width="1" stroke-dasharray="1.8 1"/><line x1="681.5" y1="202" x2="681.5" y2="395" stroke="#767676" stroke-width="1" stroke-dasharray="1.8 1"/><line x1="729.5" y1="202" x2="729.5" y2="395" stroke="#767676" stroke-width="1" stroke-dasharray="1.8 1"/><line x1="777.5" y1="202" x2="777.5" y2="395" stroke="#767676" stroke-width="1" stroke-dasharray="1.8 1"/><line x1="824.5" y1="202" x2="824.5" y2="395" stroke="#767676" stroke-width="1" stroke-dasharray="1.8 1"/><line x1="865.5" y1="202" x2="865.5" y2="395" stroke="#767676" stroke-width="1" stroke-dasharray="1.8 1"/><line x1="895.5" y1="202" x2="895.5" y2="395" stroke="#767676" stroke-width="1" stroke-dasharray="1.8 1"/><line x1="923.5" y1="202" x2="923.5" y2="395" stroke="#767676" stroke-width="1" stroke-dasharray="1.8 1"/><line x1="952.5" y1="202" x2="952.5" y2="395" stroke="#767676" stroke-width="1" stroke-dasharray="1.8 1"/></g><text transform="scale(0.64,1)" x="38.91 46.48 54.06 61.64 69.22 76.80 122.27 129.84 137.42 145.00 190.47 198.05 205.62 213.20 258.67 266.25 273.83 281.41 326.87 334.45 342.03 349.61" y="212" fill="#b8b8b8" stroke="#b8b8b8" stroke-width="0.3" font-family="'Liberation Mono',monospace" font-size="12.5" font-weight="normal">:06:00:---:---:---:---</text><text transform="scale(0.95,1)" x="5.79 16.00 61.95 72.16 107.89 118.11 153.84 164.05 199.79 210.00" y="212" fill="#b8b8b8" stroke="#b8b8b8" stroke-width="0.25" font-family="'Liberation Sans',sans-serif" font-size="10" font-weight="normal">時刻始値高値安値終値</text><path clip-path="url(#c2)" d="M8.2 333.6h1.6v4.1h-1.6zM12.6 342.3h1.6v5.4h-1.6zM14.8 346.4h1.6v2.9h-1.6zM17.0 346.0h1.6v2.6h-1.6zM21.4 341.2h1.6v2.3h-1.6zM25.8 339.3h1.6v1.8h-1.6zM39.0 332.3h1.6v5.7h-1.6zM41.2 327.0h1.6v6.4h-1.6zM43.4 322.4h1.6v5.5h-1.6zM72.0 351.2h1.6v1.7h-1.6zM85.2 361.2h1.6v4.8h-1.6zM87.4 357.2h1.6v5.3h-1.6zM89.6 357.8h1.6v1.8h-1.6zM96.2 354.1h1.6v5.9h-1.6zM98.4 349.6h1.6v5.3h-1.6zM102.8 345.7h1.6v2.6h-1.6zM109.4 342.2h1.6v4.9h-1.6zM120.4 351.4h1.6v7.3h-1.6zM122.6 346.9h1.6v5.5h-1.6zM127.0 334.9h1.6v7.6h-1.6zM131.4 325.3h1.6v7.5h-1.6zM140.2 332.1h1.6v4.3h-1.6zM157.8 344.1h1.6v5.4h-1.6zM164.4 345.6h1.6v3.8h-1.6zM166.6 340.9h1.6v5.2h-1.6zM168.8 334.8h1.6v7.1h-1.6zM179.8 315.2h1.6v5.5h-1.6zM208.4 338.4h1.6v2.8h-1.6zM212.8 331.6h1.6v3.6h-1.6zM215.0 333.1h1.6v4.0h-1.6zM219.4 340.4h1.6v4.0h-1.6zM228.2 343.8h1.6v5.1h-1.6zM237.0 340.4h1.6v1.7h-1.6zM241.4 337.7h1.6v2.0h-1.6zM243.6 337.1h1.6v2.0h-1.6zM250.2 335.8h1.6v3.6h-1.6zM256.8 337.4h1.6v6.8h-1.6zM265.6 333.2h1.6v6.9h-1.6zM267.8 331.4h1.6v2.8h-1.6zM272.2 324.7h1.6v5.8h-1.6zM287.6 318.4h1.6v2.5h-1.6zM292.0 319.2h1.6v3.9h-1.6zM296.4 320.0h1.6v3.3h-1.6zM311.8 316.4h1.6v2.0h-1.6zM316.2 312.1h1.6v3.9h-1.6zM318.4 303.0h1.6v10.5h-1.6zM325.0 316.0h1.6v1.7h-1.6zM331.6 314.4h1.6v2.6h-1.6zM351.4 319.0h1.6v4.5h-1.6zM362.4 317.0h1.6v2.4h-1.6zM366.8 311.1h1.6v4.4h-1.6zM382.2 320.5h1.6v4.3h-1.6zM391.0 326.5h1.6v1.7h-1.6zM399.8 327.9h1.6v2.5h-1.6zM410.8 323.0h1.6v4.5h-1.6zM415.2 318.3h1.6v2.6h-1.6zM419.6 324.5h1.6v4.5h-1.6zM426.2 340.3h1.6v6.2h-1.6zM428.4 345.4h1.6v2.8h-1.6zM432.8 338.5h1.6v5.3h-1.6zM443.8 334.7h1.6v5.3h-1.6zM448.2 335.6h1.6v5.1h-1.6zM454.8 334.3h1.6v3.5h-1.6zM457.0 326.4h1.6v9.0h-1.6zM472.4 328.8h1.6v3.6h-1.6zM474.6 330.0h1.6v4.2h-1.6zM487.8 342.4h1.6v1.7h-1.6zM492.2 338.4h1.6v3.4h-1.6zM498.8 337.4h1.6v3.8h-1.6zM525.2 370.4h1.6v2.2h-1.6zM529.6 371.9h1.6v4.9h-1.6zM531.8 375.8h1.6v6.2h-1.6zM542.8 373.9h1.6v2.1h-1.6zM551.6 374.4h1.6v3.1h-1.6zM560.4 371.9h1.6v2.2h-1.6zM564.8 373.4h1.6v1.7h-1.6zM569.2 368.5h1.6v4.5h-1.6zM573.6 363.9h1.6v3.3h-1.6zM578.0 360.4h1.6v2.4h-1.6zM591.2 357.5h1.6v6.4h-1.6zM593.4 361.0h1.6v4.7h-1.6zM597.8 349.2h1.6v6.9h-1.6zM606.6 353.2h1.6v3.3h-1.6zM613.2 354.4h1.6v2.3h-1.6zM624.2 360.8h1.6v4.5h-1.6zM646.2 345.0h1.6v7.9h-1.6zM648.4 345.4h1.6v11.8h-1.6zM655.0 357.6h1.6v11.2h-1.6zM657.2 337.5h1.6v21.0h-1.6zM668.2 318.0h1.6v6.5h-1.6zM674.8 309.6h1.6v9.1h-1.6zM683.6 309.5h1.6v4.7h-1.6zM685.8 303.3h1.6v6.8h-1.6zM696.8 300.8h1.6v7.1h-1.6zM701.2 294.5h1.6v6.8h-1.6zM703.4 284.0h1.6v11.6h-1.6zM707.8 290.9h1.6v8.0h-1.6zM710.0 297.9h1.6v4.7h-1.6zM716.6 311.2h1.6v4.7h-1.6zM721.0 285.0h1.6v15.1h-1.6zM729.8 272.5h1.6v8.6h-1.6zM732.0 264.2h1.6v9.3h-1.6zM734.2 261.4h1.6v4.8h-1.6zM740.8 261.3h1.6v6.1h-1.6zM743.0 257.0h1.6v4.9h-1.6zM754.0 260.4h1.6v4.5h-1.6zM756.2 260.9h1.6v7.7h-1.6zM758.4 255.2h1.6v6.5h-1.6zM767.2 243.2h1.6v8.2h-1.6zM769.4 233.4h1.6v11.1h-1.6zM771.6 226.4h1.6v8.2h-1.6zM778.2 230.3h1.6v4.6h-1.6zM780.4 227.9h1.6v4.5h-1.6zM784.8 230.7h1.6v2.2h-1.6zM787.0 229.0h1.6v3.0h-1.6zM789.2 228.4h1.6v4.4h-1.6zM800.2 227.9h1.6v1.9h-1.6zM804.6 227.4h1.6v2.9h-1.6zM822.2 221.9h1.6v3.6h-1.6zM835.4 215.1h1.6v2.2h-1.6zM837.6 214.6h1.6v2.7h-1.6zM848.6 220.7h1.6v2.2h-1.6zM859.6 238.2h1.6v3.3h-1.6zM861.8 238.3h1.6v2.3h-1.6zM864.0 231.1h1.6v7.8h-1.6zM875.0 239.9h1.6v4.2h-1.6zM877.2 239.9h1.6v3.6h-1.6zM894.8 247.0h1.6v5.0h-1.6zM899.2 241.5h1.6v2.0h-1.6zM916.8 236.3h1.6v4.6h-1.6zM919.0 232.9h1.6v4.2h-1.6zM923.4 230.8h1.6v7.6h-1.6zM925.6 234.9h1.6v5.0h-1.6z" fill="#ff1a1a"/><path clip-path="url(#c2)" d="M10.4 336.9h1.6v6.5h-1.6zM19.2 343.0h1.6v3.7h-1.6zM30.2 339.7h1.6v2.8h-1.6zM32.4 341.0h1.6v1.8h-1.6zM47.8 326.6h1.6v6.3h-1.6zM50.0 331.4h1.6v7.5h-1.6zM52.2 337.9h1.6v4.1h-1.6zM65.4 350.2h1.6v4.5h-1.6zM74.2 352.1h1.6v1.8h-1.6zM76.4 353.1h1.6v2.5h-1.6zM78.6 354.4h1.6v4.1h-1.6zM91.8 358.9h1.6v2.6h-1.6zM113.8 343.5h1.6v15.9h-1.6zM129.2 331.6h1.6v4.4h-1.6zM135.8 324.8h1.6v6.3h-1.6zM138.0 330.1h1.6v2.5h-1.6zM142.4 335.6h1.6v6.6h-1.6zM146.8 347.7h1.6v3.4h-1.6zM149.0 346.1h1.6v3.8h-1.6zM151.2 343.3h1.6v4.1h-1.6zM160.0 348.4h1.6v2.6h-1.6zM171.0 331.2h1.6v5.0h-1.6zM175.4 324.6h1.6v4.9h-1.6zM184.2 314.8h1.6v5.3h-1.6zM188.6 322.2h1.6v4.5h-1.6zM190.8 325.7h1.6v4.1h-1.6zM210.6 334.1h1.6v5.7h-1.6zM221.6 339.9h1.6v4.0h-1.6zM223.8 337.2h1.6v3.9h-1.6zM226.0 336.9h1.6v12.7h-1.6zM230.4 342.5h1.6v2.2h-1.6zM248.0 338.0h1.6v2.3h-1.6zM252.4 334.4h1.6v4.5h-1.6zM254.6 337.8h1.6v8.8h-1.6zM261.2 338.4h1.6v7.5h-1.6zM281.0 324.7h1.6v3.3h-1.6zM283.2 322.1h1.6v3.4h-1.6zM298.6 319.8h1.6v1.8h-1.6zM300.8 320.5h1.6v2.4h-1.6zM303.0 321.4h1.6v2.9h-1.6zM322.8 314.0h1.6v3.2h-1.6zM333.8 312.5h1.6v2.9h-1.6zM336.0 312.3h1.6v3.3h-1.6zM340.4 316.9h1.6v3.1h-1.6zM349.2 318.3h1.6v6.4h-1.6zM353.6 317.8h1.6v1.7h-1.6zM364.6 314.0h1.6v4.5h-1.6zM369.0 308.6h1.6v3.7h-1.6zM371.2 308.1h1.6v5.6h-1.6zM373.4 312.8h1.6v4.6h-1.6zM380.0 317.2h1.6v4.1h-1.6zM384.4 323.9h1.6v2.5h-1.6zM404.2 326.3h1.6v3.0h-1.6zM417.4 318.9h1.6v6.7h-1.6zM421.8 328.3h1.6v5.3h-1.6zM435.0 338.2h1.6v5.7h-1.6zM461.4 327.7h1.6v4.8h-1.6zM463.6 331.3h1.6v5.9h-1.6zM470.2 330.9h1.6v4.2h-1.6zM476.8 333.1h1.6v4.3h-1.6zM481.2 338.1h1.6v2.5h-1.6zM496.6 335.3h1.6v3.4h-1.6zM507.6 348.9h1.6v1.7h-1.6zM514.2 351.4h1.6v5.1h-1.6zM516.4 355.7h1.6v4.7h-1.6zM520.8 362.8h1.6v4.6h-1.6zM523.0 366.8h1.6v8.0h-1.6zM538.4 373.2h1.6v2.5h-1.6zM547.2 373.8h1.6v5.6h-1.6zM549.4 376.2h1.6v3.0h-1.6zM556.0 370.8h1.6v3.6h-1.6zM567.0 371.8h1.6v2.5h-1.6zM575.8 362.1h1.6v2.9h-1.6zM604.4 350.3h1.6v3.4h-1.6zM617.6 356.6h1.6v3.0h-1.6zM622.0 361.5h1.6v4.6h-1.6zM641.8 354.1h1.6v1.7h-1.6zM644.0 352.3h1.6v2.4h-1.6zM650.6 355.6h1.6v10.1h-1.6zM652.8 364.2h1.6v4.7h-1.6zM661.6 334.9h1.6v2.3h-1.6zM670.4 316.4h1.6v3.4h-1.6zM672.6 318.1h1.6v4.4h-1.6zM681.4 306.6h1.6v6.9h-1.6zM690.2 310.2h1.6v2.1h-1.6zM694.6 307.3h1.6v5.0h-1.6zM705.6 282.3h1.6v9.8h-1.6zM714.4 306.8h1.6v8.1h-1.6zM736.4 265.4h1.6v3.4h-1.6zM745.2 256.9h1.6v3.1h-1.6zM747.4 259.0h1.6v2.5h-1.6zM760.6 252.6h1.6v3.4h-1.6zM776.0 223.9h1.6v7.8h-1.6zM782.6 229.0h1.6v2.5h-1.6zM791.4 232.1h1.6v5.5h-1.6zM793.6 236.8h1.6v1.7h-1.6zM806.8 229.3h1.6v2.9h-1.6zM811.2 229.8h1.6v3.6h-1.6zM817.8 220.9h1.6v6.8h-1.6zM820.0 224.8h1.6v2.9h-1.6zM824.4 218.9h1.6v3.8h-1.6zM831.0 212.4h1.6v5.8h-1.6zM839.8 216.0h1.6v5.0h-1.6zM846.4 219.7h1.6v1.8h-1.6zM850.8 222.1h1.6v2.9h-1.6zM855.2 230.2h1.6v4.7h-1.6zM857.4 234.4h1.6v4.6h-1.6zM868.4 227.1h1.6v3.3h-1.6zM870.6 229.0h1.6v8.2h-1.6zM888.2 244.0h1.6v8.2h-1.6zM892.6 250.8h1.6v3.9h-1.6zM903.6 240.4h1.6v4.8h-1.6zM910.2 238.9h1.6v1.7h-1.6zM927.8 234.7h1.6v6.3h-1.6zM934.4 240.3h1.6v1.7h-1.6zM938.8 241.0h1.6v1.7h-1.6zM943.2 239.5h1.6v2.1h-1.6zM945.4 238.4h1.6v2.2h-1.6zM967.4 235.4h1.6v6.0h-1.6z" fill="#2a84f0"/><path clip-path="url(#c2)" d="M6.0 334.1h1.5v2.1h-1.5zM23.6 340.1h3.0v1.8h-3.0zM34.6 340.2h1.5v1.7h-1.5zM58.8 348.9h3.0v1.8h-3.0zM61.0 349.9h3.0v2.9h-3.0zM67.6 349.3h2.5v1.7h-2.5zM80.8 357.5h3.0v5.3h-3.0zM83.0 362.2h3.0v2.8h-3.0zM111.6 338.3h3.0v6.1h-3.0zM116.0 358.6h1.5v1.7h-1.5zM118.2 357.7h3.0v1.7h-3.0zM153.4 342.0h1.5v2.4h-1.5zM155.6 342.6h1.5v2.5h-1.5zM173.2 328.9h1.5v3.1h-1.5zM177.6 319.9h1.5v5.5h-1.5zM182.0 314.4h1.5v1.7h-1.5zM193.0 329.1h1.5v1.7h-1.5zM199.6 330.9h1.5v3.3h-1.5zM201.8 333.4h2.5v3.6h-2.5zM204.0 336.5h3.0v3.2h-3.0zM234.8 341.2h1.5v1.7h-1.5zM239.2 339.2h2.5v1.8h-2.5zM245.8 338.1h2.5v1.7h-2.5zM259.0 334.7h1.5v4.6h-1.5zM276.6 322.9h1.5v1.7h-1.5zM278.8 322.9h2.5v5.0h-2.5zM289.8 318.1h1.5v1.7h-1.5zM342.6 317.8h3.0v1.7h-3.0zM344.8 317.3h2.5v1.7h-2.5zM347.0 317.5h2.5v1.9h-2.5zM358.0 317.3h1.5v2.3h-1.5zM360.2 318.2h2.5v1.7h-2.5zM386.6 325.6h2.5v1.7h-2.5zM388.8 326.2h3.0v1.7h-3.0zM402.0 328.7h1.5v2.0h-1.5zM406.4 325.6h2.5v1.7h-2.5zM408.6 325.8h2.5v1.7h-2.5zM413.0 320.5h3.0v3.5h-3.0zM450.4 334.6h1.5v2.2h-1.5zM452.6 336.3h2.5v1.8h-2.5zM465.8 336.3h2.5v2.7h-2.5zM468.0 334.2h3.0v3.4h-3.0zM490.0 340.9h1.5v1.9h-1.5zM494.4 336.1h1.5v3.3h-1.5zM501.0 340.3h3.0v2.9h-3.0zM505.4 345.3h2.5v4.1h-2.5zM509.8 349.4h1.5v1.7h-1.5zM512.0 349.3h2.5v2.7h-2.5zM553.8 373.3h2.5v2.2h-2.5zM584.6 358.9h3.0v1.7h-3.0zM586.8 357.5h3.0v1.9h-3.0zM589.0 356.8h3.0v1.7h-3.0zM600.0 348.7h2.5v1.7h-2.5zM611.0 355.5h3.0v1.8h-3.0zM626.4 356.7h1.5v4.5h-1.5zM628.6 355.4h2.5v1.9h-2.5zM630.8 354.8h1.5v1.7h-1.5zM633.0 354.5h3.0v1.7h-3.0zM635.2 354.2h3.0v1.7h-3.0zM659.4 334.7h1.5v3.4h-1.5zM677.0 303.1h3.0v7.0h-3.0zM679.2 301.6h2.5v5.8h-2.5zM692.4 311.7h3.0v1.7h-3.0zM718.8 299.2h2.5v12.6h-2.5zM738.6 266.7h3.0v2.9h-3.0zM751.8 258.8h1.5v2.3h-1.5zM765.0 250.4h1.5v1.7h-1.5zM842.0 219.6h2.5v1.7h-2.5zM844.2 219.5h1.5v1.7h-1.5zM879.4 236.7h2.5v3.7h-2.5zM881.6 234.9h2.5v2.4h-2.5zM886.0 240.4h1.5v4.6h-1.5zM890.4 251.2h2.5v3.7h-2.5zM901.4 241.9h1.5v1.7h-1.5zM908.0 239.8h3.0v3.5h-3.0zM914.6 240.2h3.0v1.7h-3.0zM930.0 240.2h3.0v1.7h-3.0zM932.2 240.5h1.5v1.7h-1.5zM936.6 241.0h1.5v1.7h-1.5zM947.6 238.8h1.5v1.7h-1.5zM952.0 238.9h2.5v1.7h-2.5zM954.2 238.7h2.5v1.7h-2.5zM956.4 238.1h3.0v1.7h-3.0zM963.0 236.3h3.0v1.7h-3.0zM965.2 235.6h2.5v1.7h-2.5z" fill="#d0c870"/><text transform="scale(0.64,1)" x="196.09 203.67" y="392" fill="#c8c8c8" stroke="#c8c8c8" stroke-width="0.3" font-family="'Liberation Mono',monospace" font-size="12" font-weight="normal">25</text><text transform="scale(0.64,1)" x="1216.41 1223.98" y="392" fill="#c8c8c8" stroke="#c8c8c8" stroke-width="0.3" font-family="'Liberation Mono',monospace" font-size="12" font-weight="normal">26</text><text transform="scale(0.64,1)" x="26.56 34.14" y="404" fill="#c8c8c8" stroke="#c8c8c8" stroke-width="0.3" font-family="'Liberation Mono',monospace" font-size="11.5" font-weight="normal">03</text><text transform="scale(0.64,1)" x="90.62 98.20" y="404" fill="#c8c8c8" stroke="#c8c8c8" stroke-width="0.3" font-family="'Liberation Mono',monospace" font-size="11.5" font-weight="normal">04</text><text transform="scale(0.64,1)" x="148.44 156.02" y="404" fill="#c8c8c8" stroke="#c8c8c8" stroke-width="0.3" font-family="'Liberation Mono',monospace" font-size="11.5" font-weight="normal">05</text><text transform="scale(0.64,1)" x="175.00 182.58" y="404" fill="#c8c8c8" stroke="#c8c8c8" stroke-width="0.3" font-family="'Liberation Mono',monospace" font-size="11.5" font-weight="normal">06</text><text transform="scale(0.64,1)" x="176.56 184.14" y="404" fill="#c8c8c8" stroke="#c8c8c8" stroke-width="0.3" font-family="'Liberation Mono',monospace" font-size="11.5" font-weight="normal">06</text><text transform="scale(0.64,1)" x="215.62 223.20" y="404" fill="#c8c8c8" stroke="#c8c8c8" stroke-width="0.3" font-family="'Liberation Mono',monospace" font-size="11.5" font-weight="normal">09</text><text transform="scale(0.64,1)" x="290.62 298.20" y="404" fill="#c8c8c8" stroke="#c8c8c8" stroke-width="0.3" font-family="'Liberation Mono',monospace" font-size="11.5" font-weight="normal">10</text><text transform="scale(0.64,1)" x="365.62 373.20" y="404" fill="#c8c8c8" stroke="#c8c8c8" stroke-width="0.3" font-family="'Liberation Mono',monospace" font-size="11.5" font-weight="normal">11</text><text transform="scale(0.64,1)" x="437.50 445.08" y="404" fill="#c8c8c8" stroke="#c8c8c8" stroke-width="0.3" font-family="'Liberation Mono',monospace" font-size="11.5" font-weight="normal">12</text><text transform="scale(0.64,1)" x="512.50 520.08" y="404" fill="#c8c8c8" stroke="#c8c8c8" stroke-width="0.3" font-family="'Liberation Mono',monospace" font-size="11.5" font-weight="normal">13</text><text transform="scale(0.64,1)" x="584.38 591.95" y="404" fill="#c8c8c8" stroke="#c8c8c8" stroke-width="0.3" font-family="'Liberation Mono',monospace" font-size="11.5" font-weight="normal">14</text><text transform="scale(0.64,1)" x="637.50 645.08" y="404" fill="#c8c8c8" stroke="#c8c8c8" stroke-width="0.3" font-family="'Liberation Mono',monospace" font-size="11.5" font-weight="normal">15</text><text transform="scale(0.64,1)" x="670.31 677.89" y="404" fill="#c8c8c8" stroke="#c8c8c8" stroke-width="0.3" font-family="'Liberation Mono',monospace" font-size="11.5" font-weight="normal">16</text><text transform="scale(0.64,1)" x="706.25 713.83" y="404" fill="#c8c8c8" stroke="#c8c8c8" stroke-width="0.3" font-family="'Liberation Mono',monospace" font-size="11.5" font-weight="normal">17</text><text transform="scale(0.64,1)" x="781.25 788.83" y="404" fill="#c8c8c8" stroke="#c8c8c8" stroke-width="0.3" font-family="'Liberation Mono',monospace" font-size="11.5" font-weight="normal">18</text><text transform="scale(0.64,1)" x="853.12 860.70" y="404" fill="#c8c8c8" stroke="#c8c8c8" stroke-width="0.3" font-family="'Liberation Mono',monospace" font-size="11.5" font-weight="normal">19</text><text transform="scale(0.64,1)" x="918.75 926.33" y="404" fill="#c8c8c8" stroke="#c8c8c8" stroke-width="0.3" font-family="'Liberation Mono',monospace" font-size="11.5" font-weight="normal">20</text><text transform="scale(0.64,1)" x="989.06 996.64" y="404" fill="#c8c8c8" stroke="#c8c8c8" stroke-width="0.3" font-family="'Liberation Mono',monospace" font-size="11.5" font-weight="normal">21</text><text transform="scale(0.64,1)" x="1065.62 1073.20" y="404" fill="#c8c8c8" stroke="#c8c8c8" stroke-width="0.3" font-family="'Liberation Mono',monospace" font-size="11.5" font-weight="normal">22</text><text transform="scale(0.64,1)" x="1140.62 1148.20" y="404" fill="#c8c8c8" stroke="#c8c8c8" stroke-width="0.3" font-family="'Liberation Mono',monospace" font-size="11.5" font-weight="normal">23</text><text transform="scale(0.64,1)" x="1215.62 1223.20" y="404" fill="#c8c8c8" stroke="#c8c8c8" stroke-width="0.3" font-family="'Liberation Mono',monospace" font-size="11.5" font-weight="normal">00</text><text transform="scale(0.64,1)" x="1289.06 1296.64" y="404" fill="#c8c8c8" stroke="#c8c8c8" stroke-width="0.3" font-family="'Liberation Mono',monospace" font-size="11.5" font-weight="normal">01</text><text transform="scale(0.64,1)" x="1353.12 1360.70" y="404" fill="#c8c8c8" stroke="#c8c8c8" stroke-width="0.3" font-family="'Liberation Mono',monospace" font-size="11.5" font-weight="normal">02</text><text transform="scale(0.64,1)" x="1400.00 1407.58" y="404" fill="#c8c8c8" stroke="#c8c8c8" stroke-width="0.3" font-family="'Liberation Mono',monospace" font-size="11.5" font-weight="normal">03</text><text transform="scale(0.64,1)" x="1443.75 1451.33" y="404" fill="#c8c8c8" stroke="#c8c8c8" stroke-width="0.3" font-family="'Liberation Mono',monospace" font-size="11.5" font-weight="normal">04</text><text transform="scale(0.64,1)" x="1489.06 1496.64" y="404" fill="#c8c8c8" stroke="#c8c8c8" stroke-width="0.3" font-family="'Liberation Mono',monospace" font-size="11.5" font-weight="normal">05</text><text transform="scale(0.64,1)" x="1493.75 1501.33" y="404" fill="#c8c8c8" stroke="#c8c8c8" stroke-width="0.3" font-family="'Liberation Mono',monospace" font-size="11.5" font-weight="normal">06</text><text transform="scale(0.64,1)" x="1518.75 1526.33 1533.91 1541.48 1549.06" y="249.5" fill="#c8c8c8" stroke="#c8c8c8" stroke-width="0.3" font-family="'Liberation Mono',monospace" font-size="12.5" font-weight="normal">3,850</text><text transform="scale(0.64,1)" x="1518.75 1526.33 1533.91 1541.48 1549.06" y="299.0" fill="#c8c8c8" stroke="#c8c8c8" stroke-width="0.3" font-family="'Liberation Mono',monospace" font-size="12.5" font-weight="normal">3,825</text><text transform="scale(0.64,1)" x="1518.75 1526.33 1533.91 1541.48 1549.06" y="349.3" fill="#c8c8c8" stroke="#c8c8c8" stroke-width="0.3" font-family="'Liberation Mono',monospace" font-size="12.5" font-weight="normal">3,800</text><text transform="scale(0.64,1)" x="1518.75 1526.33 1533.91 1541.48 1549.06" y="399.9" fill="#c8c8c8" stroke="#c8c8c8" stroke-width="0.3" font-family="'Liberation Mono',monospace" font-size="12.5" font-weight="normal">3,775</text><rect x="971" y="227" width="47" height="17" fill="#d4d4d4" shape-rendering="crispEdges"/><g stroke="#181818" stroke-width="0.35"><text transform="scale(0.8,1)" x="1226.88 1233.06 1239.25 1245.44 1251.63" y="237.1" fill="#181818" stroke="#181818" stroke-width="0.3" font-family="'Liberation Mono',monospace" font-size="11.5" font-weight="bold">3,857</text></g><g shape-rendering="crispEdges"><rect x="5" y="413" width="1" height="124" fill="#585858"/><rect x="6" y="413" width="964" height="112" fill="#000"/><rect x="970" y="413" width="48" height="124" fill="#1c1c1c"/><rect x="970" y="413" width="1" height="113" fill="#d8d8d8"/><rect x="5" y="525" width="966" height="1" fill="#a8a8a8"/><rect x="6" y="526" width="964" height="1" fill="#000"/><rect x="6" y="527" width="964" height="10" fill="#1c1c1c"/><rect x="5" y="537" width="1013" height="1" fill="#000"/><line x1="6" y1="443.5" x2="970" y2="443.5" stroke="#525252" stroke-width="1" stroke-dasharray="2 0.9"/><line x1="6" y1="484.5" x2="970" y2="484.5" stroke="#525252" stroke-width="1" stroke-dasharray="2 0.9"/><line x1="16.5" y1="413" x2="16.5" y2="525" stroke="#767676" stroke-width="1" stroke-dasharray="1.8 1"/><line x1="57.5" y1="413" x2="57.5" y2="525" stroke="#767676" stroke-width="1" stroke-dasharray="1.8 1"/><line x1="94.5" y1="413" x2="94.5" y2="525" stroke="#767676" stroke-width="1" stroke-dasharray="1.8 1"/><rect x="123" y="413" width="2" height="112" fill="#555555"/><line x1="137.5" y1="413" x2="137.5" y2="525" stroke="#767676" stroke-width="1" stroke-dasharray="1.8 1"/><line x1="185.5" y1="413" x2="185.5" y2="525" stroke="#767676" stroke-width="1" stroke-dasharray="1.8 1"/><line x1="233.5" y1="413" x2="233.5" y2="525" stroke="#767676" stroke-width="1" stroke-dasharray="1.8 1"/><line x1="279.5" y1="413" x2="279.5" y2="525" stroke="#767676" stroke-width="1" stroke-dasharray="1.8 1"/><line x1="327.5" y1="413" x2="327.5" y2="525" stroke="#767676" stroke-width="1" stroke-dasharray="1.8 1"/><line x1="373.5" y1="413" x2="373.5" y2="525" stroke="#767676" stroke-width="1" stroke-dasharray="1.8 1"/><line x1="420.5" y1="413" x2="420.5" y2="525" stroke="#767676" stroke-width="1" stroke-dasharray="1.8 1"/><line x1="428.5" y1="413" x2="428.5" y2="525" stroke="#767676" stroke-width="1" stroke-dasharray="1.8 1"/><line x1="452.5" y1="413" x2="452.5" y2="525" stroke="#767676" stroke-width="1" stroke-dasharray="1.8 1"/><line x1="499.5" y1="413" x2="499.5" y2="525" stroke="#767676" stroke-width="1" stroke-dasharray="1.8 1"/><line x1="545.5" y1="413" x2="545.5" y2="525" stroke="#767676" stroke-width="1" stroke-dasharray="1.8 1"/><line x1="587.5" y1="413" x2="587.5" y2="525" stroke="#767676" stroke-width="1" stroke-dasharray="1.8 1"/><line x1="632.5" y1="413" x2="632.5" y2="525" stroke="#767676" stroke-width="1" stroke-dasharray="1.8 1"/><line x1="681.5" y1="413" x2="681.5" y2="525" stroke="#767676" stroke-width="1" stroke-dasharray="1.8 1"/><line x1="729.5" y1="413" x2="729.5" y2="525" stroke="#767676" stroke-width="1" stroke-dasharray="1.8 1"/><line x1="777.5" y1="413" x2="777.5" y2="525" stroke="#767676" stroke-width="1" stroke-dasharray="1.8 1"/><line x1="824.5" y1="413" x2="824.5" y2="525" stroke="#767676" stroke-width="1" stroke-dasharray="1.8 1"/><line x1="865.5" y1="413" x2="865.5" y2="525" stroke="#767676" stroke-width="1" stroke-dasharray="1.8 1"/><line x1="895.5" y1="413" x2="895.5" y2="525" stroke="#767676" stroke-width="1" stroke-dasharray="1.8 1"/><line x1="923.5" y1="413" x2="923.5" y2="525" stroke="#767676" stroke-width="1" stroke-dasharray="1.8 1"/><line x1="952.5" y1="413" x2="952.5" y2="525" stroke="#767676" stroke-width="1" stroke-dasharray="1.8 1"/></g><text transform="scale(0.64,1)" x="10.94 41.06 48.59 56.12 63.66 71.19 86.25 93.78 101.31 108.84 116.37 138.97 146.50 154.03 161.56 169.09 191.69 236.87 244.41 251.94 259.47 267.00 282.06 289.59 297.12 304.66 312.19 334.78 342.31 349.84 357.37 364.91 447.75 455.28 462.81 470.34 477.87 485.41 500.47 508.00 515.53 523.06 530.59" y="422" fill="#b8b8b8" stroke="#b8b8b8" stroke-width="0.3" font-family="'Liberation Mono',monospace" font-size="12.5" font-weight="normal">[22/086,6021.00][22/083,8571.00]:06:002,745</text><text transform="scale(0.95,1)" x="12.44 85.37 118.99 134.21 144.36 217.28 255.98 266.13 281.35 291.49" y="422" fill="#b8b8b8" stroke="#b8b8b8" stroke-width="0.25" font-family="'Liberation Sans',sans-serif" font-size="10" font-weight="normal">金×－白金×終値時刻</text><polyline clip-path="url(#c3)" points="6.0,510.0 7.5,511.9 9.0,512.1 10.5,512.8 12.0,517.2 13.5,515.7 15.0,513.1 16.5,512.7 18.0,509.1 19.5,508.6 21.0,505.0 22.5,508.1 24.0,511.1 25.5,510.7 27.0,509.1 28.5,509.0 30.0,510.1 31.3,510.9 32.7,509.6 34.0,512.1 35.0,510.4 36.0,507.0 37.3,508.8 38.7,508.7 40.0,511.1 41.5,513.1 43.0,516.2 44.0,519.2 45.5,517.2 47.0,513.1 48.3,511.5 49.7,512.5 51.0,509.1 52.5,510.2 54.0,507.0 55.5,508.6 57.0,507.0 58.5,506.7 60.0,510.1 61.5,508.1 63.0,510.1 64.5,505.1 66.0,502.0 67.0,500.9 68.0,501.0 69.5,504.9 71.0,507.0 72.5,510.1 74.0,510.1 75.5,507.8 77.0,505.0 78.0,502.1 79.0,497.9 80.5,497.2 82.0,495.9 83.5,493.8 85.0,495.9 86.5,495.5 88.0,494.9 89.0,503.0 90.5,498.6 92.0,496.9 93.5,494.0 95.0,491.9 96.5,491.1 98.0,494.9 99.5,496.1 101.0,495.9 102.0,503.0 103.3,506.2 104.7,503.7 106.0,507.0 107.3,507.7 108.7,505.5 110.0,508.1 111.5,506.9 113.0,507.0 114.0,515.1 115.0,503.9 116.0,495.9 117.0,503.1 118.0,507.0 119.0,501.0 120.0,492.9 121.0,505.8 122.0,515.1 123.0,501.0 124.0,494.7 125.0,490.9 126.5,492.4 128.0,491.9 129.5,494.3 131.0,494.9 132.5,495.9 134.0,496.9 135.5,499.8 137.0,498.9 138.3,499.5 139.7,497.9 141.0,498.9 142.5,499.4 144.0,497.9 145.5,495.3 147.0,492.9 148.5,490.0 150.0,489.8 151.0,491.4 152.0,491.9 153.5,492.8 155.0,497.9 156.5,495.7 158.0,493.9 159.5,492.7 161.0,490.9 162.5,490.6 164.0,494.9 165.5,495.1 167.0,493.9 168.5,494.0 170.0,497.9 171.5,501.6 173.0,504.0 174.0,501.3 175.0,500.0 176.5,495.3 178.0,494.9 179.5,494.1 181.0,488.8 182.5,485.3 184.0,485.8 185.5,485.2 187.0,487.8 188.5,486.8 190.0,485.8 191.5,486.1 193.0,488.8 194.5,487.4 196.0,485.8 197.5,484.2 199.0,482.8 200.5,484.2 202.0,484.8 203.5,484.5 205.0,483.8 206.5,483.9 208.0,485.8 209.5,487.5 211.0,491.9 212.5,493.8 214.0,493.9 215.5,492.6 217.0,491.9 218.0,494.5 219.0,496.9 220.5,496.8 222.0,492.9 223.5,489.1 225.0,489.8 226.5,487.8 228.0,487.8 229.5,489.1 231.0,489.8 232.3,487.7 233.7,491.0 235.0,489.8 236.5,489.3 238.0,489.8 239.5,492.0 241.0,495.9 242.5,495.5 244.0,497.9 245.5,497.5 247.0,492.9 248.5,490.3 250.0,491.9 251.3,493.7 252.7,493.5 254.0,492.9 255.0,495.7 256.0,494.9 257.5,493.8 259.0,490.9 260.5,490.7 262.0,491.9 263.0,490.1 264.0,487.8 265.5,491.3 267.0,490.9 268.3,488.8 269.7,492.5 271.0,490.9 272.0,490.1 273.0,487.8 274.5,488.5 276.0,491.9 277.5,494.0 279.0,491.9 280.5,488.9 282.0,487.8 283.5,486.5 285.0,489.8 286.5,489.8 288.0,491.9 289.5,490.4 291.0,488.8 292.5,485.6 294.0,486.8 295.5,487.2 297.0,486.8 298.5,487.0 300.0,487.8 301.0,485.5 302.0,484.8 303.5,485.0 305.0,482.8 306.3,483.0 307.7,484.2 309.0,481.7 310.5,484.5 312.0,483.8 313.5,485.0 315.0,482.8 316.5,485.8 318.0,484.8 319.0,488.9 320.0,489.8 321.5,489.7 323.0,489.8 324.5,486.8 326.0,487.8 327.5,488.1 329.0,488.8 330.5,488.4 332.0,486.8 333.5,490.5 335.0,489.8 336.5,490.5 338.0,489.8 339.5,488.6 341.0,486.8 342.5,483.9 344.0,484.8 345.5,486.0 347.0,485.8 348.5,481.1 350.0,480.7 351.5,482.1 353.0,486.8 354.5,484.2 356.0,485.8 357.5,485.4 359.0,482.8 360.5,484.8 362.0,482.8 363.5,483.2 365.0,482.8 366.5,480.9 368.0,482.8 369.5,481.8 371.0,478.7 372.5,475.7 374.0,475.7 375.5,478.2 377.0,478.8 378.5,481.6 380.0,482.8 381.5,483.3 383.0,479.8 384.5,477.8 386.0,478.8 387.0,475.7 388.5,477.5 390.0,481.8 391.5,481.0 393.0,481.8 394.5,477.9 396.0,477.8 397.5,481.8 399.0,481.8 400.5,482.9 402.0,482.8 403.5,480.5 405.0,481.8 406.5,482.7 408.0,483.8 409.5,482.0 411.0,483.8 412.5,484.4 414.0,480.8 415.5,480.2 417.0,480.8 418.5,475.0 420.0,473.7 421.5,476.9 423.0,477.8 424.5,476.0 426.0,475.7 427.5,470.8 429.0,464.6 430.5,465.9 432.0,464.6 433.5,464.6 435.0,468.6 436.5,469.4 438.0,469.7 439.5,470.7 441.0,467.6 442.5,469.9 444.0,474.7 445.0,474.0 446.0,475.7 447.5,471.5 449.0,465.6 450.5,464.1 452.0,466.6 453.5,467.1 455.0,464.6 456.5,466.5 458.0,465.6 459.5,466.7 461.0,463.6 462.5,465.6 464.0,464.6 465.5,464.5 467.0,463.6 468.5,461.4 470.0,459.5 471.5,458.2 473.0,456.5 474.5,460.7 476.0,463.6 477.5,465.8 479.0,463.6 480.0,459.5 481.0,458.5 482.5,460.0 484.0,461.6 485.5,459.8 487.0,458.5 488.5,453.8 490.0,451.4 491.5,446.9 493.0,445.4 494.0,447.7 495.0,447.4 496.5,449.8 498.0,451.4 499.0,451.8 500.0,450.5 501.5,448.4 503.0,448.5 504.5,444.4 506.0,440.4 507.5,438.8 509.0,440.4 510.5,437.7 512.0,438.3 513.0,436.1 514.0,437.3 515.0,443.4 516.5,443.6 518.0,442.4 519.0,445.4 520.5,444.0 522.0,439.4 523.0,436.7 524.0,433.3 525.0,438.6 526.0,441.4 527.5,436.4 529.0,435.3 530.5,432.3 532.0,429.2 533.0,427.2 534.5,429.1 536.0,434.3 537.5,434.9 539.0,435.3 540.5,434.1 542.0,435.3 543.5,434.7 545.0,436.3 546.5,435.2 548.0,430.2 549.5,432.0 551.0,433.3 552.5,431.6 554.0,432.3 555.5,433.3 557.0,434.3 558.0,431.8 559.0,431.3 560.0,435.2 561.0,436.3 562.5,432.3 564.0,429.2 565.5,431.8 567.0,431.3 568.5,432.7 570.0,433.3 571.0,436.5 572.0,438.3 573.5,437.3 575.0,435.3 576.5,437.7 578.0,439.4 579.5,436.3 581.0,437.3 582.5,439.7 584.0,439.4 585.5,439.9 587.0,439.4 588.5,437.1 590.0,437.3 591.5,436.3 593.0,435.3 594.5,433.8 596.0,428.2 597.5,431.0 599.0,432.3 600.5,436.6 602.0,440.4 603.5,442.5 605.0,444.4 606.5,440.9 608.0,441.4 609.5,438.3 611.0,435.3 612.5,436.0 614.0,437.3 615.5,440.0 617.0,441.4 618.5,439.2 620.0,438.3 621.5,437.2 623.0,439.4 624.0,436.4 625.0,430.2 626.5,430.1 628.0,432.3 629.5,431.0 631.0,432.3 632.5,433.0 634.0,434.3 635.5,435.3 637.0,432.3 638.5,432.7 640.0,431.3 641.5,429.1 643.0,430.2 644.0,431.4 645.0,436.3 646.5,438.9 648.0,441.4 649.0,433.8 650.0,430.2 651.0,425.9 652.0,424.2 653.5,420.9 655.0,421.1 656.0,421.8 657.0,419.1 658.0,422.4 659.0,422.1 660.0,429.9 661.0,434.3 662.5,436.0 664.0,436.3 665.5,432.7 667.0,433.3 668.5,435.3 670.0,439.4 671.5,442.9 673.0,443.4 674.5,440.8 676.0,442.4 677.5,443.9 679.0,445.4 680.5,446.8 682.0,445.4 683.5,445.8 685.0,448.5 686.5,448.8 688.0,450.5 689.0,455.2 690.0,458.6 691.0,455.8 692.0,451.5 693.5,450.4 695.0,452.5 696.5,458.4 698.0,461.6 699.5,462.7 701.0,467.7 702.5,467.6 704.0,470.7 705.5,468.8 707.0,468.7 708.5,465.8 710.0,465.7 711.5,461.9 713.0,458.6 714.5,453.9 716.0,450.5 717.5,450.5 719.0,448.5 720.5,452.0 722.0,452.5 723.5,454.3 725.0,453.5 726.5,459.7 728.0,462.6 729.5,463.0 731.0,465.7 732.5,465.9 734.0,464.6 735.5,468.0 737.0,468.7 738.5,470.8 740.0,469.7 741.5,472.4 743.0,475.8 744.5,478.1 746.0,476.8 747.5,475.2 749.0,474.8 750.5,477.5 752.0,476.6 753.0,480.4 754.0,482.6 755.5,479.6 757.0,480.6 758.0,486.6 759.0,488.7 760.5,492.0 762.0,492.8 763.0,492.0 764.0,490.7 765.5,492.8 767.0,490.7 768.0,492.0 769.0,489.7 770.0,496.7 771.0,500.9 772.0,506.1 773.0,508.9 774.5,513.0 776.0,515.0 777.0,513.2 778.0,515.0 779.0,513.4 780.0,511.0 781.5,508.7 783.0,511.0 784.0,509.5 785.0,507.9 786.0,513.0 787.5,508.4 789.0,506.9 790.0,503.8 791.0,498.8 792.0,499.7 793.0,496.8 794.5,496.9 796.0,499.8 797.5,498.1 799.0,495.8 800.0,496.8 801.0,499.8 802.5,503.0 804.0,501.9 805.3,502.2 806.7,501.1 808.0,502.9 809.5,502.6 811.0,500.9 812.5,501.7 814.0,502.9 815.5,505.0 817.0,506.9 818.5,505.2 820.0,503.9 821.5,502.3 823.0,503.9 824.5,501.1 826.0,501.9 827.5,502.9 829.0,502.9 830.5,503.2 832.0,506.9 833.5,506.9 835.0,507.9 836.5,509.2 838.0,510.0 839.5,511.8 841.0,511.0 842.5,510.4 844.0,513.0 845.5,511.4 847.0,511.0 848.5,509.2 850.0,511.0 851.5,505.7 853.0,502.9 854.5,502.0 856.0,496.8 857.5,495.3 859.0,491.7 860.5,490.6 862.0,493.4 863.3,496.9 864.7,495.1 866.0,497.1 867.0,503.0 868.5,504.8 870.0,506.0 871.5,506.6 873.0,504.5 874.5,503.6 876.0,505.2 877.0,500.9 878.0,498.6 879.0,497.0 880.0,497.1 881.0,499.4 882.0,500.8 883.0,505.2 884.0,505.2 885.0,504.7 886.0,507.4 887.0,507.4 888.0,503.0 889.0,495.7 890.0,493.4 891.0,490.5 892.0,489.6 893.0,489.0 894.0,486.7 895.0,488.3 896.5,490.7 898.0,491.2 899.0,490.8 900.0,494.2 901.0,497.2 902.0,497.1 903.0,494.9 904.0,494.9 905.0,495.3 906.0,492.7 907.0,494.2 908.0,493.4 909.5,494.3 911.0,496.4 912.0,494.3 913.0,494.2 914.0,494.1 915.0,493.4 916.5,493.2 918.0,493.4 919.5,494.5 921.0,496.4 922.0,500.1 923.0,499.3 924.0,501.9 925.0,506.0 926.0,502.3 927.0,500.0 928.0,500.4 929.0,498.6 930.0,500.2 931.0,502.3 932.5,499.3 934.0,498.6 935.0,497.1 936.0,496.4 937.5,495.4 939.0,497.9 940.5,497.8 942.0,500.8 943.5,502.6 945.0,501.5 946.5,500.6 948.0,500.0 949.0,498.7 950.0,497.9 951.5,496.6 953.0,495.7 954.0,493.8 955.0,494.9 956.5,493.2 958.0,494.9 959.5,492.3 961.0,494.2 962.0,495.0 963.0,494.9 964.5,493.3 966.0,493.4 967.5,493.5 969.0,492.0" fill="none" stroke="#ff0000" stroke-width="2.3" stroke-linejoin="round"/><text transform="scale(0.64,1)" x="196.09 203.67" y="522" fill="#c8c8c8" stroke="#c8c8c8" stroke-width="0.3" font-family="'Liberation Mono',monospace" font-size="12" font-weight="normal">25</text><text transform="scale(0.64,1)" x="1216.41 1223.98" y="522" fill="#c8c8c8" stroke="#c8c8c8" stroke-width="0.3" font-family="'Liberation Mono',monospace" font-size="12" font-weight="normal">26</text><text transform="scale(0.64,1)" x="26.56 34.14" y="534" fill="#c8c8c8" stroke="#c8c8c8" stroke-width="0.3" font-family="'Liberation Mono',monospace" font-size="11.5" font-weight="normal">03</text><text transform="scale(0.64,1)" x="90.62 98.20" y="534" fill="#c8c8c8" stroke="#c8c8c8" stroke-width="0.3" font-family="'Liberation Mono',monospace" font-size="11.5" font-weight="normal">04</text><text transform="scale(0.64,1)" x="148.44 156.02" y="534" fill="#c8c8c8" stroke="#c8c8c8" stroke-width="0.3" font-family="'Liberation Mono',monospace" font-size="11.5" font-weight="normal">05</text><text transform="scale(0.64,1)" x="175.00 182.58" y="534" fill="#c8c8c8" stroke="#c8c8c8" stroke-width="0.3" font-family="'Liberation Mono',monospace" font-size="11.5" font-weight="normal">06</text><text transform="scale(0.64,1)" x="176.56 184.14" y="534" fill="#c8c8c8" stroke="#c8c8c8" stroke-width="0.3" font-family="'Liberation Mono',monospace" font-size="11.5" font-weight="normal">06</text><text transform="scale(0.64,1)" x="215.62 223.20" y="534" fill="#c8c8c8" stroke="#c8c8c8" stroke-width="0.3" font-family="'Liberation Mono',monospace" font-size="11.5" font-weight="normal">09</text><text transform="scale(0.64,1)" x="290.62 298.20" y="534" fill="#c8c8c8" stroke="#c8c8c8" stroke-width="0.3" font-family="'Liberation Mono',monospace" font-size="11.5" font-weight="normal">10</text><text transform="scale(0.64,1)" x="365.62 373.20" y="534" fill="#c8c8c8" stroke="#c8c8c8" stroke-width="0.3" font-family="'Liberation Mono',monospace" font-size="11.5" font-weight="normal">11</text><text transform="scale(0.64,1)" x="437.50 445.08" y="534" fill="#c8c8c8" stroke="#c8c8c8" stroke-width="0.3" font-family="'Liberation Mono',monospace" font-size="11.5" font-weight="normal">12</text><text transform="scale(0.64,1)" x="512.50 520.08" y="534" fill="#c8c8c8" stroke="#c8c8c8" stroke-width="0.3" font-family="'Liberation Mono',monospace" font-size="11.5" font-weight="normal">13</text><text transform="scale(0.64,1)" x="584.38 591.95" y="534" fill="#c8c8c8" stroke="#c8c8c8" stroke-width="0.3" font-family="'Liberation Mono',monospace" font-size="11.5" font-weight="normal">14</text><text transform="scale(0.64,1)" x="637.50 645.08" y="534" fill="#c8c8c8" stroke="#c8c8c8" stroke-width="0.3" font-family="'Liberation Mono',monospace" font-size="11.5" font-weight="normal">15</text><text transform="scale(0.64,1)" x="670.31 677.89" y="534" fill="#c8c8c8" stroke="#c8c8c8" stroke-width="0.3" font-family="'Liberation Mono',monospace" font-size="11.5" font-weight="normal">16</text><text transform="scale(0.64,1)" x="706.25 713.83" y="534" fill="#c8c8c8" stroke="#c8c8c8" stroke-width="0.3" font-family="'Liberation Mono',monospace" font-size="11.5" font-weight="normal">17</text><text transform="scale(0.64,1)" x="781.25 788.83" y="534" fill="#c8c8c8" stroke="#c8c8c8" stroke-width="0.3" font-family="'Liberation Mono',monospace" font-size="11.5" font-weight="normal">18</text><text transform="scale(0.64,1)" x="853.12 860.70" y="534" fill="#c8c8c8" stroke="#c8c8c8" stroke-width="0.3" font-family="'Liberation Mono',monospace" font-size="11.5" font-weight="normal">19</text><text transform="scale(0.64,1)" x="918.75 926.33" y="534" fill="#c8c8c8" stroke="#c8c8c8" stroke-width="0.3" font-family="'Liberation Mono',monospace" font-size="11.5" font-weight="normal">20</text><text transform="scale(0.64,1)" x="989.06 996.64" y="534" fill="#c8c8c8" stroke="#c8c8c8" stroke-width="0.3" font-family="'Liberation Mono',monospace" font-size="11.5" font-weight="normal">21</text><text transform="scale(0.64,1)" x="1065.62 1073.20" y="534" fill="#c8c8c8" stroke="#c8c8c8" stroke-width="0.3" font-family="'Liberation Mono',monospace" font-size="11.5" font-weight="normal">22</text><text transform="scale(0.64,1)" x="1140.62 1148.20" y="534" fill="#c8c8c8" stroke="#c8c8c8" stroke-width="0.3" font-family="'Liberation Mono',monospace" font-size="11.5" font-weight="normal">23</text><text transform="scale(0.64,1)" x="1215.62 1223.20" y="534" fill="#c8c8c8" stroke="#c8c8c8" stroke-width="0.3" font-family="'Liberation Mono',monospace" font-size="11.5" font-weight="normal">00</text><text transform="scale(0.64,1)" x="1289.06 1296.64" y="534" fill="#c8c8c8" stroke="#c8c8c8" stroke-width="0.3" font-family="'Liberation Mono',monospace" font-size="11.5" font-weight="normal">01</text><text transform="scale(0.64,1)" x="1353.12 1360.70" y="534" fill="#c8c8c8" stroke="#c8c8c8" stroke-width="0.3" font-family="'Liberation Mono',monospace" font-size="11.5" font-weight="normal">02</text><text transform="scale(0.64,1)" x="1400.00 1407.58" y="534" fill="#c8c8c8" stroke="#c8c8c8" stroke-width="0.3" font-family="'Liberation Mono',monospace" font-size="11.5" font-weight="normal">03</text><text transform="scale(0.64,1)" x="1443.75 1451.33" y="534" fill="#c8c8c8" stroke="#c8c8c8" stroke-width="0.3" font-family="'Liberation Mono',monospace" font-size="11.5" font-weight="normal">04</text><text transform="scale(0.64,1)" x="1489.06 1496.64" y="534" fill="#c8c8c8" stroke="#c8c8c8" stroke-width="0.3" font-family="'Liberation Mono',monospace" font-size="11.5" font-weight="normal">05</text><text transform="scale(0.64,1)" x="1493.75 1501.33" y="534" fill="#c8c8c8" stroke="#c8c8c8" stroke-width="0.3" font-family="'Liberation Mono',monospace" font-size="11.5" font-weight="normal">06</text><text transform="scale(0.64,1)" x="1518.75 1526.33 1533.91 1541.48 1549.06" y="442.5" fill="#c8c8c8" stroke="#c8c8c8" stroke-width="0.3" font-family="'Liberation Mono',monospace" font-size="12.5" font-weight="normal">2,775</text><text transform="scale(0.64,1)" x="1518.75 1526.33 1533.91 1541.48 1549.06" y="483.5" fill="#c8c8c8" stroke="#c8c8c8" stroke-width="0.3" font-family="'Liberation Mono',monospace" font-size="12.5" font-weight="normal">2,750</text><text transform="scale(0.64,1)" x="1518.75 1526.33 1533.91 1541.48 1549.06" y="524.5" fill="#c8c8c8" stroke="#c8c8c8" stroke-width="0.3" font-family="'Liberation Mono',monospace" font-size="12.5" font-weight="normal">2,725</text><rect x="971" y="485" width="47" height="17" fill="#d4d4d4" shape-rendering="crispEdges"/><g stroke="#181818" stroke-width="0.35"><text transform="scale(0.8,1)" x="1226.88 1233.06 1239.25 1245.44 1251.63" y="495.1" fill="#181818" stroke="#181818" stroke-width="0.3" font-family="'Liberation Mono',monospace" font-size="11.5" font-weight="bold">2,745</text></g><g shape-rendering="crispEdges"><rect x="5" y="198" width="1013" height="2" fill="#f0f0f0"/><rect x="5" y="200" width="1013" height="1" fill="#c8c8c8"/><rect x="5" y="201" width="1013" height="1" fill="#404040"/><rect x="5" y="408" width="1013" height="2" fill="#f0f0f0"/><rect x="5" y="410" width="1013" height="1" fill="#d0d0d0"/><rect x="5" y="411" width="1013" height="1" fill="#a8a8a8"/><rect x="5" y="412" width="1013" height="1" fill="#383838"/></g></svg></body></html>
